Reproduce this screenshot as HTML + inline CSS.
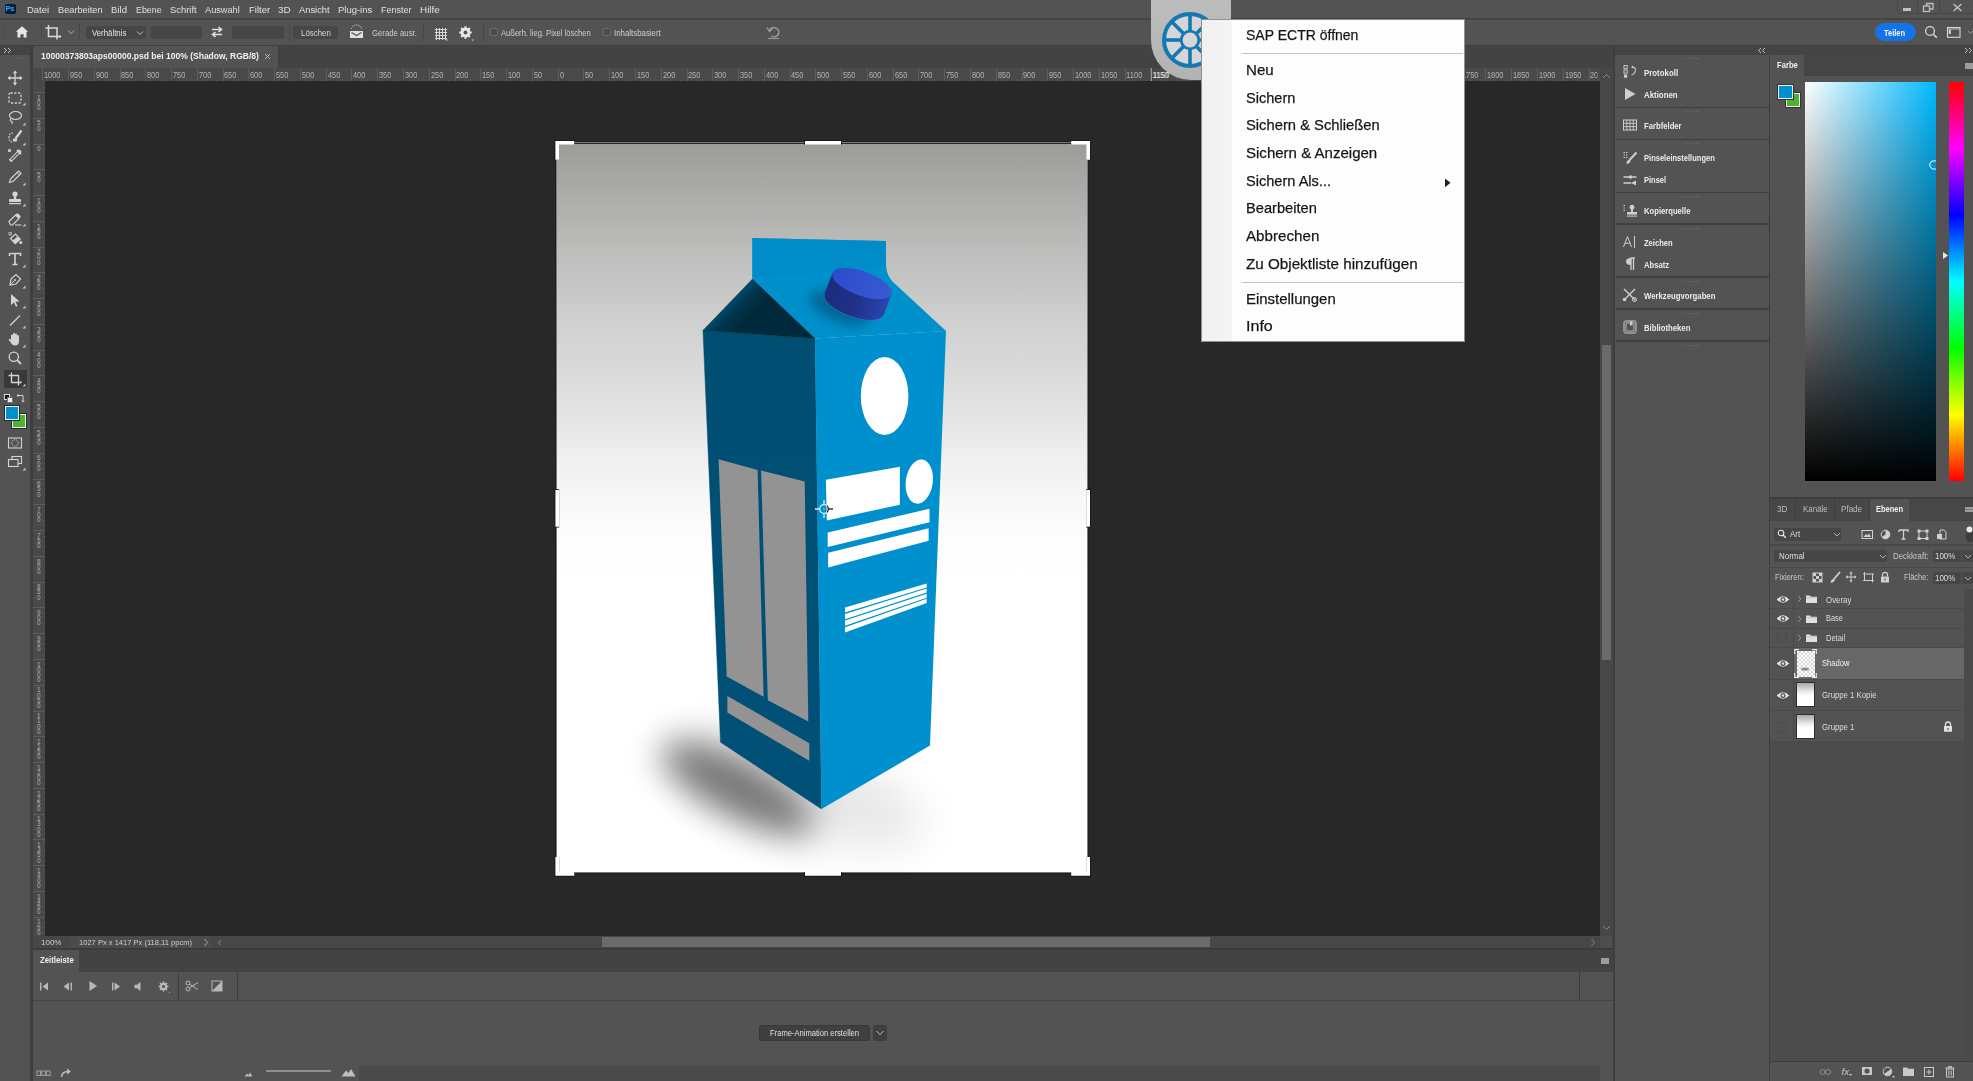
<!DOCTYPE html>
<html><head><meta charset="utf-8"><style>
html,body{margin:0;padding:0;}
body{width:1973px;height:1081px;overflow:hidden;position:relative;background:#535353;font-family:"Liberation Sans", sans-serif;}
div,svg{box-sizing:border-box;}
</style></head><body>
<div style="position:absolute;left:0px;top:0px;width:1973px;height:18px;background:#535353;"></div>
<div style="position:absolute;left:0px;top:18px;width:1973px;height:1.8px;background:#444444;"></div>
<div style="position:absolute;left:0px;top:19.5px;width:1973px;height:25.5px;background:#535353;"></div>
<div style="position:absolute;left:0px;top:45px;width:1973px;height:1px;background:#3f3f3f;"></div>
<div style="position:absolute;left:0px;top:46px;width:30px;height:1035px;background:#535353;"></div>
<div style="position:absolute;left:0px;top:46px;width:30px;height:9px;background:#444444;"></div>
<div style="position:absolute;left:30px;top:46px;width:3px;height:1035px;background:#3e3e3e;"></div>
<div style="position:absolute;left:33px;top:46px;width:1580px;height:22px;background:#434343;"></div>
<div style="position:absolute;left:33px;top:46px;width:244.6px;height:22px;background:#535353;"></div>
<div style="position:absolute;left:277.6px;top:46px;width:1.4px;height:22px;background:#3d3d3d;"></div>
<div style="position:absolute;left:33px;top:67.8px;width:1567px;height:13px;background:#494949;"></div>
<div style="position:absolute;left:33px;top:67.8px;width:12px;height:13px;background:#474747;"></div>
<div style="position:absolute;left:67.83px;top:67.8px;width:1532.17px;height:13px;background:repeating-linear-gradient(90deg,#5d5d5d 0px,#5d5d5d 1px,transparent 1px,transparent 25.772px);"></div>
<div style="position:absolute;left:47.21px;top:79px;width:1552.79px;height:1.5px;background:repeating-linear-gradient(90deg,#575757 0px,#575757 1px,transparent 1px,transparent 5.154px);"></div>
<div style="position:absolute;left:45px;top:80.5px;width:1555px;height:0.5px;background:#454545;"></div>
<div style="position:absolute;left:42.06000000000006px;top:67.8px;width:1px;height:13px;background:#5d5d5d;"></div>
<div style="position:absolute;left:44.06000000000006px;top:69.36px;height:12px;line-height:12px;font-size:8.8px;color:#b4b4b4;font-weight:normal;white-space:nowrap;transform:scaleX(0.838);transform-origin:0 50%;overflow:hidden;">1000</div>
<div style="position:absolute;left:69.83200000000005px;top:69.36px;height:12px;line-height:12px;font-size:8.8px;color:#b4b4b4;font-weight:normal;white-space:nowrap;transform:scaleX(0.838);transform-origin:0 50%;overflow:hidden;">950</div>
<div style="position:absolute;left:95.60400000000004px;top:69.36px;height:12px;line-height:12px;font-size:8.8px;color:#b4b4b4;font-weight:normal;white-space:nowrap;transform:scaleX(0.838);transform-origin:0 50%;overflow:hidden;">900</div>
<div style="position:absolute;left:121.37600000000003px;top:69.36px;height:12px;line-height:12px;font-size:8.8px;color:#b4b4b4;font-weight:normal;white-space:nowrap;transform:scaleX(0.838);transform-origin:0 50%;overflow:hidden;">850</div>
<div style="position:absolute;left:147.14800000000002px;top:69.36px;height:12px;line-height:12px;font-size:8.8px;color:#b4b4b4;font-weight:normal;white-space:nowrap;transform:scaleX(0.838);transform-origin:0 50%;overflow:hidden;">800</div>
<div style="position:absolute;left:172.92000000000002px;top:69.36px;height:12px;line-height:12px;font-size:8.8px;color:#b4b4b4;font-weight:normal;white-space:nowrap;transform:scaleX(0.838);transform-origin:0 50%;overflow:hidden;">750</div>
<div style="position:absolute;left:198.692px;top:69.36px;height:12px;line-height:12px;font-size:8.8px;color:#b4b4b4;font-weight:normal;white-space:nowrap;transform:scaleX(0.838);transform-origin:0 50%;overflow:hidden;">700</div>
<div style="position:absolute;left:224.464px;top:69.36px;height:12px;line-height:12px;font-size:8.8px;color:#b4b4b4;font-weight:normal;white-space:nowrap;transform:scaleX(0.838);transform-origin:0 50%;overflow:hidden;">650</div>
<div style="position:absolute;left:250.236px;top:69.36px;height:12px;line-height:12px;font-size:8.8px;color:#b4b4b4;font-weight:normal;white-space:nowrap;transform:scaleX(0.838);transform-origin:0 50%;overflow:hidden;">600</div>
<div style="position:absolute;left:276.00800000000004px;top:69.36px;height:12px;line-height:12px;font-size:8.8px;color:#b4b4b4;font-weight:normal;white-space:nowrap;transform:scaleX(0.838);transform-origin:0 50%;overflow:hidden;">550</div>
<div style="position:absolute;left:301.78000000000003px;top:69.36px;height:12px;line-height:12px;font-size:8.8px;color:#b4b4b4;font-weight:normal;white-space:nowrap;transform:scaleX(0.838);transform-origin:0 50%;overflow:hidden;">500</div>
<div style="position:absolute;left:327.552px;top:69.36px;height:12px;line-height:12px;font-size:8.8px;color:#b4b4b4;font-weight:normal;white-space:nowrap;transform:scaleX(0.838);transform-origin:0 50%;overflow:hidden;">450</div>
<div style="position:absolute;left:353.324px;top:69.36px;height:12px;line-height:12px;font-size:8.8px;color:#b4b4b4;font-weight:normal;white-space:nowrap;transform:scaleX(0.838);transform-origin:0 50%;overflow:hidden;">400</div>
<div style="position:absolute;left:379.096px;top:69.36px;height:12px;line-height:12px;font-size:8.8px;color:#b4b4b4;font-weight:normal;white-space:nowrap;transform:scaleX(0.838);transform-origin:0 50%;overflow:hidden;">350</div>
<div style="position:absolute;left:404.868px;top:69.36px;height:12px;line-height:12px;font-size:8.8px;color:#b4b4b4;font-weight:normal;white-space:nowrap;transform:scaleX(0.838);transform-origin:0 50%;overflow:hidden;">300</div>
<div style="position:absolute;left:430.64px;top:69.36px;height:12px;line-height:12px;font-size:8.8px;color:#b4b4b4;font-weight:normal;white-space:nowrap;transform:scaleX(0.838);transform-origin:0 50%;overflow:hidden;">250</div>
<div style="position:absolute;left:456.41200000000003px;top:69.36px;height:12px;line-height:12px;font-size:8.8px;color:#b4b4b4;font-weight:normal;white-space:nowrap;transform:scaleX(0.838);transform-origin:0 50%;overflow:hidden;">200</div>
<div style="position:absolute;left:482.18399999999997px;top:69.36px;height:12px;line-height:12px;font-size:8.8px;color:#b4b4b4;font-weight:normal;white-space:nowrap;transform:scaleX(0.838);transform-origin:0 50%;overflow:hidden;">150</div>
<div style="position:absolute;left:507.956px;top:69.36px;height:12px;line-height:12px;font-size:8.8px;color:#b4b4b4;font-weight:normal;white-space:nowrap;transform:scaleX(0.838);transform-origin:0 50%;overflow:hidden;">100</div>
<div style="position:absolute;left:533.728px;top:69.36px;height:12px;line-height:12px;font-size:8.8px;color:#b4b4b4;font-weight:normal;white-space:nowrap;transform:scaleX(0.838);transform-origin:0 50%;overflow:hidden;">50</div>
<div style="position:absolute;left:559.5px;top:69.36px;height:12px;line-height:12px;font-size:8.8px;color:#b4b4b4;font-weight:normal;white-space:nowrap;transform:scaleX(0.838);transform-origin:0 50%;overflow:hidden;">0</div>
<div style="position:absolute;left:585.272px;top:69.36px;height:12px;line-height:12px;font-size:8.8px;color:#b4b4b4;font-weight:normal;white-space:nowrap;transform:scaleX(0.838);transform-origin:0 50%;overflow:hidden;">50</div>
<div style="position:absolute;left:611.044px;top:69.36px;height:12px;line-height:12px;font-size:8.8px;color:#b4b4b4;font-weight:normal;white-space:nowrap;transform:scaleX(0.838);transform-origin:0 50%;overflow:hidden;">100</div>
<div style="position:absolute;left:636.816px;top:69.36px;height:12px;line-height:12px;font-size:8.8px;color:#b4b4b4;font-weight:normal;white-space:nowrap;transform:scaleX(0.838);transform-origin:0 50%;overflow:hidden;">150</div>
<div style="position:absolute;left:662.588px;top:69.36px;height:12px;line-height:12px;font-size:8.8px;color:#b4b4b4;font-weight:normal;white-space:nowrap;transform:scaleX(0.838);transform-origin:0 50%;overflow:hidden;">200</div>
<div style="position:absolute;left:688.36px;top:69.36px;height:12px;line-height:12px;font-size:8.8px;color:#b4b4b4;font-weight:normal;white-space:nowrap;transform:scaleX(0.838);transform-origin:0 50%;overflow:hidden;">250</div>
<div style="position:absolute;left:714.1320000000001px;top:69.36px;height:12px;line-height:12px;font-size:8.8px;color:#b4b4b4;font-weight:normal;white-space:nowrap;transform:scaleX(0.838);transform-origin:0 50%;overflow:hidden;">300</div>
<div style="position:absolute;left:739.904px;top:69.36px;height:12px;line-height:12px;font-size:8.8px;color:#b4b4b4;font-weight:normal;white-space:nowrap;transform:scaleX(0.838);transform-origin:0 50%;overflow:hidden;">350</div>
<div style="position:absolute;left:765.6759999999999px;top:69.36px;height:12px;line-height:12px;font-size:8.8px;color:#b4b4b4;font-weight:normal;white-space:nowrap;transform:scaleX(0.838);transform-origin:0 50%;overflow:hidden;">400</div>
<div style="position:absolute;left:791.448px;top:69.36px;height:12px;line-height:12px;font-size:8.8px;color:#b4b4b4;font-weight:normal;white-space:nowrap;transform:scaleX(0.838);transform-origin:0 50%;overflow:hidden;">450</div>
<div style="position:absolute;left:817.22px;top:69.36px;height:12px;line-height:12px;font-size:8.8px;color:#b4b4b4;font-weight:normal;white-space:nowrap;transform:scaleX(0.838);transform-origin:0 50%;overflow:hidden;">500</div>
<div style="position:absolute;left:842.992px;top:69.36px;height:12px;line-height:12px;font-size:8.8px;color:#b4b4b4;font-weight:normal;white-space:nowrap;transform:scaleX(0.838);transform-origin:0 50%;overflow:hidden;">550</div>
<div style="position:absolute;left:868.764px;top:69.36px;height:12px;line-height:12px;font-size:8.8px;color:#b4b4b4;font-weight:normal;white-space:nowrap;transform:scaleX(0.838);transform-origin:0 50%;overflow:hidden;">600</div>
<div style="position:absolute;left:894.5360000000001px;top:69.36px;height:12px;line-height:12px;font-size:8.8px;color:#b4b4b4;font-weight:normal;white-space:nowrap;transform:scaleX(0.838);transform-origin:0 50%;overflow:hidden;">650</div>
<div style="position:absolute;left:920.308px;top:69.36px;height:12px;line-height:12px;font-size:8.8px;color:#b4b4b4;font-weight:normal;white-space:nowrap;transform:scaleX(0.838);transform-origin:0 50%;overflow:hidden;">700</div>
<div style="position:absolute;left:946.0799999999999px;top:69.36px;height:12px;line-height:12px;font-size:8.8px;color:#b4b4b4;font-weight:normal;white-space:nowrap;transform:scaleX(0.838);transform-origin:0 50%;overflow:hidden;">750</div>
<div style="position:absolute;left:971.852px;top:69.36px;height:12px;line-height:12px;font-size:8.8px;color:#b4b4b4;font-weight:normal;white-space:nowrap;transform:scaleX(0.838);transform-origin:0 50%;overflow:hidden;">800</div>
<div style="position:absolute;left:997.624px;top:69.36px;height:12px;line-height:12px;font-size:8.8px;color:#b4b4b4;font-weight:normal;white-space:nowrap;transform:scaleX(0.838);transform-origin:0 50%;overflow:hidden;">850</div>
<div style="position:absolute;left:1023.396px;top:69.36px;height:12px;line-height:12px;font-size:8.8px;color:#b4b4b4;font-weight:normal;white-space:nowrap;transform:scaleX(0.838);transform-origin:0 50%;overflow:hidden;">900</div>
<div style="position:absolute;left:1049.168px;top:69.36px;height:12px;line-height:12px;font-size:8.8px;color:#b4b4b4;font-weight:normal;white-space:nowrap;transform:scaleX(0.838);transform-origin:0 50%;overflow:hidden;">950</div>
<div style="position:absolute;left:1074.94px;top:69.36px;height:12px;line-height:12px;font-size:8.8px;color:#b4b4b4;font-weight:normal;white-space:nowrap;transform:scaleX(0.838);transform-origin:0 50%;overflow:hidden;">1000</div>
<div style="position:absolute;left:1100.712px;top:69.36px;height:12px;line-height:12px;font-size:8.8px;color:#b4b4b4;font-weight:normal;white-space:nowrap;transform:scaleX(0.838);transform-origin:0 50%;overflow:hidden;">1050</div>
<div style="position:absolute;left:1126.484px;top:69.36px;height:12px;line-height:12px;font-size:8.8px;color:#b4b4b4;font-weight:normal;white-space:nowrap;transform:scaleX(0.867);transform-origin:0 50%;overflow:hidden;">1100</div>
<div style="position:absolute;left:1152.2559999999999px;top:69.36px;height:12px;line-height:12px;font-size:8.8px;color:#b4b4b4;font-weight:normal;white-space:nowrap;transform:scaleX(0.867);transform-origin:0 50%;overflow:hidden;">1150</div>
<div style="position:absolute;left:1178.028px;top:69.36px;height:12px;line-height:12px;font-size:8.8px;color:#b4b4b4;font-weight:normal;white-space:nowrap;transform:scaleX(0.838);transform-origin:0 50%;overflow:hidden;">1200</div>
<div style="position:absolute;left:1203.8px;top:69.36px;height:12px;line-height:12px;font-size:8.8px;color:#b4b4b4;font-weight:normal;white-space:nowrap;transform:scaleX(0.838);transform-origin:0 50%;overflow:hidden;">1250</div>
<div style="position:absolute;left:1229.5720000000001px;top:69.36px;height:12px;line-height:12px;font-size:8.8px;color:#b4b4b4;font-weight:normal;white-space:nowrap;transform:scaleX(0.838);transform-origin:0 50%;overflow:hidden;">1300</div>
<div style="position:absolute;left:1255.344px;top:69.36px;height:12px;line-height:12px;font-size:8.8px;color:#b4b4b4;font-weight:normal;white-space:nowrap;transform:scaleX(0.838);transform-origin:0 50%;overflow:hidden;">1350</div>
<div style="position:absolute;left:1281.116px;top:69.36px;height:12px;line-height:12px;font-size:8.8px;color:#b4b4b4;font-weight:normal;white-space:nowrap;transform:scaleX(0.838);transform-origin:0 50%;overflow:hidden;">1400</div>
<div style="position:absolute;left:1306.888px;top:69.36px;height:12px;line-height:12px;font-size:8.8px;color:#b4b4b4;font-weight:normal;white-space:nowrap;transform:scaleX(0.838);transform-origin:0 50%;overflow:hidden;">1450</div>
<div style="position:absolute;left:1332.6599999999999px;top:69.36px;height:12px;line-height:12px;font-size:8.8px;color:#b4b4b4;font-weight:normal;white-space:nowrap;transform:scaleX(0.838);transform-origin:0 50%;overflow:hidden;">1500</div>
<div style="position:absolute;left:1358.4319999999998px;top:69.36px;height:12px;line-height:12px;font-size:8.8px;color:#b4b4b4;font-weight:normal;white-space:nowrap;transform:scaleX(0.838);transform-origin:0 50%;overflow:hidden;">1550</div>
<div style="position:absolute;left:1384.204px;top:69.36px;height:12px;line-height:12px;font-size:8.8px;color:#b4b4b4;font-weight:normal;white-space:nowrap;transform:scaleX(0.838);transform-origin:0 50%;overflow:hidden;">1600</div>
<div style="position:absolute;left:1409.976px;top:69.36px;height:12px;line-height:12px;font-size:8.8px;color:#b4b4b4;font-weight:normal;white-space:nowrap;transform:scaleX(0.838);transform-origin:0 50%;overflow:hidden;">1650</div>
<div style="position:absolute;left:1435.748px;top:69.36px;height:12px;line-height:12px;font-size:8.8px;color:#b4b4b4;font-weight:normal;white-space:nowrap;transform:scaleX(0.838);transform-origin:0 50%;overflow:hidden;">1700</div>
<div style="position:absolute;left:1461.52px;top:69.36px;height:12px;line-height:12px;font-size:8.8px;color:#b4b4b4;font-weight:normal;white-space:nowrap;transform:scaleX(0.838);transform-origin:0 50%;overflow:hidden;">1750</div>
<div style="position:absolute;left:1487.292px;top:69.36px;height:12px;line-height:12px;font-size:8.8px;color:#b4b4b4;font-weight:normal;white-space:nowrap;transform:scaleX(0.838);transform-origin:0 50%;overflow:hidden;">1800</div>
<div style="position:absolute;left:1513.0639999999999px;top:69.36px;height:12px;line-height:12px;font-size:8.8px;color:#b4b4b4;font-weight:normal;white-space:nowrap;transform:scaleX(0.838);transform-origin:0 50%;overflow:hidden;">1850</div>
<div style="position:absolute;left:1538.8359999999998px;top:69.36px;height:12px;line-height:12px;font-size:8.8px;color:#b4b4b4;font-weight:normal;white-space:nowrap;transform:scaleX(0.838);transform-origin:0 50%;overflow:hidden;">1900</div>
<div style="position:absolute;left:1564.608px;top:69.36px;height:12px;line-height:12px;font-size:8.8px;color:#b4b4b4;font-weight:normal;white-space:nowrap;transform:scaleX(0.838);transform-origin:0 50%;overflow:hidden;">1950</div>
<div style="position:absolute;left:1590.3799999999999px;top:69.36px;height:12px;line-height:12px;font-size:8.8px;color:#b4b4b4;font-weight:normal;white-space:nowrap;transform:scaleX(0.838);transform-origin:0 50%;overflow:hidden;width:9.1px;">2000</div>
<div style="position:absolute;left:32.5px;top:80.8px;width:12.7px;height:855px;background:#494949;"></div>
<div style="position:absolute;left:32.5px;top:92.46px;width:12.7px;height:843.54px;background:repeating-linear-gradient(180deg,#5d5d5d 0px,#5d5d5d 1px,transparent 1px,transparent 25.772px);"></div>
<div style="position:absolute;left:43.6px;top:82.15px;width:1.5px;height:853.85px;background:repeating-linear-gradient(180deg,#575757 0px,#575757 1px,transparent 1px,transparent 5.154px);"></div>
<div style="position:absolute;left:36.9px;top:92.67px;height:9px;line-height:9px;font-size:6.3px;color:#b0b0b0;font-weight:normal;white-space:nowrap;">1</div>
<div style="position:absolute;left:36.9px;top:97.82px;height:9px;line-height:9px;font-size:6.3px;color:#b0b0b0;font-weight:normal;white-space:nowrap;">0</div>
<div style="position:absolute;left:36.9px;top:102.97px;height:9px;line-height:9px;font-size:6.3px;color:#b0b0b0;font-weight:normal;white-space:nowrap;">0</div>
<div style="position:absolute;left:36.9px;top:118.44px;height:9px;line-height:9px;font-size:6.3px;color:#b0b0b0;font-weight:normal;white-space:nowrap;">5</div>
<div style="position:absolute;left:36.9px;top:123.59px;height:9px;line-height:9px;font-size:6.3px;color:#b0b0b0;font-weight:normal;white-space:nowrap;">0</div>
<div style="position:absolute;left:36.9px;top:144.21px;height:9px;line-height:9px;font-size:6.3px;color:#b0b0b0;font-weight:normal;white-space:nowrap;">0</div>
<div style="position:absolute;left:36.9px;top:169.99px;height:9px;line-height:9px;font-size:6.3px;color:#b0b0b0;font-weight:normal;white-space:nowrap;">5</div>
<div style="position:absolute;left:36.9px;top:175.14px;height:9px;line-height:9px;font-size:6.3px;color:#b0b0b0;font-weight:normal;white-space:nowrap;">0</div>
<div style="position:absolute;left:36.9px;top:195.76px;height:9px;line-height:9px;font-size:6.3px;color:#b0b0b0;font-weight:normal;white-space:nowrap;">1</div>
<div style="position:absolute;left:36.9px;top:200.91px;height:9px;line-height:9px;font-size:6.3px;color:#b0b0b0;font-weight:normal;white-space:nowrap;">0</div>
<div style="position:absolute;left:36.9px;top:206.06px;height:9px;line-height:9px;font-size:6.3px;color:#b0b0b0;font-weight:normal;white-space:nowrap;">0</div>
<div style="position:absolute;left:36.9px;top:221.53px;height:9px;line-height:9px;font-size:6.3px;color:#b0b0b0;font-weight:normal;white-space:nowrap;">1</div>
<div style="position:absolute;left:36.9px;top:226.68px;height:9px;line-height:9px;font-size:6.3px;color:#b0b0b0;font-weight:normal;white-space:nowrap;">5</div>
<div style="position:absolute;left:36.9px;top:231.83px;height:9px;line-height:9px;font-size:6.3px;color:#b0b0b0;font-weight:normal;white-space:nowrap;">0</div>
<div style="position:absolute;left:36.9px;top:247.30px;height:9px;line-height:9px;font-size:6.3px;color:#b0b0b0;font-weight:normal;white-space:nowrap;">2</div>
<div style="position:absolute;left:36.9px;top:252.45px;height:9px;line-height:9px;font-size:6.3px;color:#b0b0b0;font-weight:normal;white-space:nowrap;">0</div>
<div style="position:absolute;left:36.9px;top:257.60px;height:9px;line-height:9px;font-size:6.3px;color:#b0b0b0;font-weight:normal;white-space:nowrap;">0</div>
<div style="position:absolute;left:36.9px;top:273.07px;height:9px;line-height:9px;font-size:6.3px;color:#b0b0b0;font-weight:normal;white-space:nowrap;">2</div>
<div style="position:absolute;left:36.9px;top:278.22px;height:9px;line-height:9px;font-size:6.3px;color:#b0b0b0;font-weight:normal;white-space:nowrap;">5</div>
<div style="position:absolute;left:36.9px;top:283.37px;height:9px;line-height:9px;font-size:6.3px;color:#b0b0b0;font-weight:normal;white-space:nowrap;">0</div>
<div style="position:absolute;left:36.9px;top:298.85px;height:9px;line-height:9px;font-size:6.3px;color:#b0b0b0;font-weight:normal;white-space:nowrap;">3</div>
<div style="position:absolute;left:36.9px;top:304.00px;height:9px;line-height:9px;font-size:6.3px;color:#b0b0b0;font-weight:normal;white-space:nowrap;">0</div>
<div style="position:absolute;left:36.9px;top:309.15px;height:9px;line-height:9px;font-size:6.3px;color:#b0b0b0;font-weight:normal;white-space:nowrap;">0</div>
<div style="position:absolute;left:36.9px;top:324.62px;height:9px;line-height:9px;font-size:6.3px;color:#b0b0b0;font-weight:normal;white-space:nowrap;">3</div>
<div style="position:absolute;left:36.9px;top:329.77px;height:9px;line-height:9px;font-size:6.3px;color:#b0b0b0;font-weight:normal;white-space:nowrap;">5</div>
<div style="position:absolute;left:36.9px;top:334.92px;height:9px;line-height:9px;font-size:6.3px;color:#b0b0b0;font-weight:normal;white-space:nowrap;">0</div>
<div style="position:absolute;left:36.9px;top:350.39px;height:9px;line-height:9px;font-size:6.3px;color:#b0b0b0;font-weight:normal;white-space:nowrap;">4</div>
<div style="position:absolute;left:36.9px;top:355.54px;height:9px;line-height:9px;font-size:6.3px;color:#b0b0b0;font-weight:normal;white-space:nowrap;">0</div>
<div style="position:absolute;left:36.9px;top:360.69px;height:9px;line-height:9px;font-size:6.3px;color:#b0b0b0;font-weight:normal;white-space:nowrap;">0</div>
<div style="position:absolute;left:36.9px;top:376.16px;height:9px;line-height:9px;font-size:6.3px;color:#b0b0b0;font-weight:normal;white-space:nowrap;">4</div>
<div style="position:absolute;left:36.9px;top:381.31px;height:9px;line-height:9px;font-size:6.3px;color:#b0b0b0;font-weight:normal;white-space:nowrap;">5</div>
<div style="position:absolute;left:36.9px;top:386.46px;height:9px;line-height:9px;font-size:6.3px;color:#b0b0b0;font-weight:normal;white-space:nowrap;">0</div>
<div style="position:absolute;left:36.9px;top:401.93px;height:9px;line-height:9px;font-size:6.3px;color:#b0b0b0;font-weight:normal;white-space:nowrap;">5</div>
<div style="position:absolute;left:36.9px;top:407.08px;height:9px;line-height:9px;font-size:6.3px;color:#b0b0b0;font-weight:normal;white-space:nowrap;">0</div>
<div style="position:absolute;left:36.9px;top:412.23px;height:9px;line-height:9px;font-size:6.3px;color:#b0b0b0;font-weight:normal;white-space:nowrap;">0</div>
<div style="position:absolute;left:36.9px;top:427.71px;height:9px;line-height:9px;font-size:6.3px;color:#b0b0b0;font-weight:normal;white-space:nowrap;">5</div>
<div style="position:absolute;left:36.9px;top:432.86px;height:9px;line-height:9px;font-size:6.3px;color:#b0b0b0;font-weight:normal;white-space:nowrap;">5</div>
<div style="position:absolute;left:36.9px;top:438.01px;height:9px;line-height:9px;font-size:6.3px;color:#b0b0b0;font-weight:normal;white-space:nowrap;">0</div>
<div style="position:absolute;left:36.9px;top:453.48px;height:9px;line-height:9px;font-size:6.3px;color:#b0b0b0;font-weight:normal;white-space:nowrap;">6</div>
<div style="position:absolute;left:36.9px;top:458.63px;height:9px;line-height:9px;font-size:6.3px;color:#b0b0b0;font-weight:normal;white-space:nowrap;">0</div>
<div style="position:absolute;left:36.9px;top:463.78px;height:9px;line-height:9px;font-size:6.3px;color:#b0b0b0;font-weight:normal;white-space:nowrap;">0</div>
<div style="position:absolute;left:36.9px;top:479.25px;height:9px;line-height:9px;font-size:6.3px;color:#b0b0b0;font-weight:normal;white-space:nowrap;">6</div>
<div style="position:absolute;left:36.9px;top:484.40px;height:9px;line-height:9px;font-size:6.3px;color:#b0b0b0;font-weight:normal;white-space:nowrap;">5</div>
<div style="position:absolute;left:36.9px;top:489.55px;height:9px;line-height:9px;font-size:6.3px;color:#b0b0b0;font-weight:normal;white-space:nowrap;">0</div>
<div style="position:absolute;left:36.9px;top:505.02px;height:9px;line-height:9px;font-size:6.3px;color:#b0b0b0;font-weight:normal;white-space:nowrap;">7</div>
<div style="position:absolute;left:36.9px;top:510.17px;height:9px;line-height:9px;font-size:6.3px;color:#b0b0b0;font-weight:normal;white-space:nowrap;">0</div>
<div style="position:absolute;left:36.9px;top:515.32px;height:9px;line-height:9px;font-size:6.3px;color:#b0b0b0;font-weight:normal;white-space:nowrap;">0</div>
<div style="position:absolute;left:36.9px;top:530.79px;height:9px;line-height:9px;font-size:6.3px;color:#b0b0b0;font-weight:normal;white-space:nowrap;">7</div>
<div style="position:absolute;left:36.9px;top:535.94px;height:9px;line-height:9px;font-size:6.3px;color:#b0b0b0;font-weight:normal;white-space:nowrap;">5</div>
<div style="position:absolute;left:36.9px;top:541.09px;height:9px;line-height:9px;font-size:6.3px;color:#b0b0b0;font-weight:normal;white-space:nowrap;">0</div>
<div style="position:absolute;left:36.9px;top:556.57px;height:9px;line-height:9px;font-size:6.3px;color:#b0b0b0;font-weight:normal;white-space:nowrap;">8</div>
<div style="position:absolute;left:36.9px;top:561.72px;height:9px;line-height:9px;font-size:6.3px;color:#b0b0b0;font-weight:normal;white-space:nowrap;">0</div>
<div style="position:absolute;left:36.9px;top:566.87px;height:9px;line-height:9px;font-size:6.3px;color:#b0b0b0;font-weight:normal;white-space:nowrap;">0</div>
<div style="position:absolute;left:36.9px;top:582.34px;height:9px;line-height:9px;font-size:6.3px;color:#b0b0b0;font-weight:normal;white-space:nowrap;">8</div>
<div style="position:absolute;left:36.9px;top:587.49px;height:9px;line-height:9px;font-size:6.3px;color:#b0b0b0;font-weight:normal;white-space:nowrap;">5</div>
<div style="position:absolute;left:36.9px;top:592.64px;height:9px;line-height:9px;font-size:6.3px;color:#b0b0b0;font-weight:normal;white-space:nowrap;">0</div>
<div style="position:absolute;left:36.9px;top:608.11px;height:9px;line-height:9px;font-size:6.3px;color:#b0b0b0;font-weight:normal;white-space:nowrap;">9</div>
<div style="position:absolute;left:36.9px;top:613.26px;height:9px;line-height:9px;font-size:6.3px;color:#b0b0b0;font-weight:normal;white-space:nowrap;">0</div>
<div style="position:absolute;left:36.9px;top:618.41px;height:9px;line-height:9px;font-size:6.3px;color:#b0b0b0;font-weight:normal;white-space:nowrap;">0</div>
<div style="position:absolute;left:36.9px;top:633.88px;height:9px;line-height:9px;font-size:6.3px;color:#b0b0b0;font-weight:normal;white-space:nowrap;">9</div>
<div style="position:absolute;left:36.9px;top:639.03px;height:9px;line-height:9px;font-size:6.3px;color:#b0b0b0;font-weight:normal;white-space:nowrap;">5</div>
<div style="position:absolute;left:36.9px;top:644.18px;height:9px;line-height:9px;font-size:6.3px;color:#b0b0b0;font-weight:normal;white-space:nowrap;">0</div>
<div style="position:absolute;left:36.9px;top:659.65px;height:9px;line-height:9px;font-size:6.3px;color:#b0b0b0;font-weight:normal;white-space:nowrap;">1</div>
<div style="position:absolute;left:36.9px;top:664.80px;height:9px;line-height:9px;font-size:6.3px;color:#b0b0b0;font-weight:normal;white-space:nowrap;">0</div>
<div style="position:absolute;left:36.9px;top:669.95px;height:9px;line-height:9px;font-size:6.3px;color:#b0b0b0;font-weight:normal;white-space:nowrap;">0</div>
<div style="position:absolute;left:36.9px;top:675.10px;height:9px;line-height:9px;font-size:6.3px;color:#b0b0b0;font-weight:normal;white-space:nowrap;">0</div>
<div style="position:absolute;left:36.9px;top:685.43px;height:9px;line-height:9px;font-size:6.3px;color:#b0b0b0;font-weight:normal;white-space:nowrap;">1</div>
<div style="position:absolute;left:36.9px;top:690.58px;height:9px;line-height:9px;font-size:6.3px;color:#b0b0b0;font-weight:normal;white-space:nowrap;">0</div>
<div style="position:absolute;left:36.9px;top:695.73px;height:9px;line-height:9px;font-size:6.3px;color:#b0b0b0;font-weight:normal;white-space:nowrap;">5</div>
<div style="position:absolute;left:36.9px;top:700.88px;height:9px;line-height:9px;font-size:6.3px;color:#b0b0b0;font-weight:normal;white-space:nowrap;">0</div>
<div style="position:absolute;left:36.9px;top:711.20px;height:9px;line-height:9px;font-size:6.3px;color:#b0b0b0;font-weight:normal;white-space:nowrap;">1</div>
<div style="position:absolute;left:36.9px;top:716.35px;height:9px;line-height:9px;font-size:6.3px;color:#b0b0b0;font-weight:normal;white-space:nowrap;">1</div>
<div style="position:absolute;left:36.9px;top:721.50px;height:9px;line-height:9px;font-size:6.3px;color:#b0b0b0;font-weight:normal;white-space:nowrap;">0</div>
<div style="position:absolute;left:36.9px;top:726.65px;height:9px;line-height:9px;font-size:6.3px;color:#b0b0b0;font-weight:normal;white-space:nowrap;">0</div>
<div style="position:absolute;left:36.9px;top:736.97px;height:9px;line-height:9px;font-size:6.3px;color:#b0b0b0;font-weight:normal;white-space:nowrap;">1</div>
<div style="position:absolute;left:36.9px;top:742.12px;height:9px;line-height:9px;font-size:6.3px;color:#b0b0b0;font-weight:normal;white-space:nowrap;">1</div>
<div style="position:absolute;left:36.9px;top:747.27px;height:9px;line-height:9px;font-size:6.3px;color:#b0b0b0;font-weight:normal;white-space:nowrap;">5</div>
<div style="position:absolute;left:36.9px;top:752.42px;height:9px;line-height:9px;font-size:6.3px;color:#b0b0b0;font-weight:normal;white-space:nowrap;">0</div>
<div style="position:absolute;left:36.9px;top:762.74px;height:9px;line-height:9px;font-size:6.3px;color:#b0b0b0;font-weight:normal;white-space:nowrap;">1</div>
<div style="position:absolute;left:36.9px;top:767.89px;height:9px;line-height:9px;font-size:6.3px;color:#b0b0b0;font-weight:normal;white-space:nowrap;">2</div>
<div style="position:absolute;left:36.9px;top:773.04px;height:9px;line-height:9px;font-size:6.3px;color:#b0b0b0;font-weight:normal;white-space:nowrap;">0</div>
<div style="position:absolute;left:36.9px;top:778.19px;height:9px;line-height:9px;font-size:6.3px;color:#b0b0b0;font-weight:normal;white-space:nowrap;">0</div>
<div style="position:absolute;left:36.9px;top:788.51px;height:9px;line-height:9px;font-size:6.3px;color:#b0b0b0;font-weight:normal;white-space:nowrap;">1</div>
<div style="position:absolute;left:36.9px;top:793.66px;height:9px;line-height:9px;font-size:6.3px;color:#b0b0b0;font-weight:normal;white-space:nowrap;">2</div>
<div style="position:absolute;left:36.9px;top:798.81px;height:9px;line-height:9px;font-size:6.3px;color:#b0b0b0;font-weight:normal;white-space:nowrap;">5</div>
<div style="position:absolute;left:36.9px;top:803.96px;height:9px;line-height:9px;font-size:6.3px;color:#b0b0b0;font-weight:normal;white-space:nowrap;">0</div>
<div style="position:absolute;left:36.9px;top:814.29px;height:9px;line-height:9px;font-size:6.3px;color:#b0b0b0;font-weight:normal;white-space:nowrap;">1</div>
<div style="position:absolute;left:36.9px;top:819.44px;height:9px;line-height:9px;font-size:6.3px;color:#b0b0b0;font-weight:normal;white-space:nowrap;">3</div>
<div style="position:absolute;left:36.9px;top:824.59px;height:9px;line-height:9px;font-size:6.3px;color:#b0b0b0;font-weight:normal;white-space:nowrap;">0</div>
<div style="position:absolute;left:36.9px;top:829.74px;height:9px;line-height:9px;font-size:6.3px;color:#b0b0b0;font-weight:normal;white-space:nowrap;">0</div>
<div style="position:absolute;left:36.9px;top:840.06px;height:9px;line-height:9px;font-size:6.3px;color:#b0b0b0;font-weight:normal;white-space:nowrap;">1</div>
<div style="position:absolute;left:36.9px;top:845.21px;height:9px;line-height:9px;font-size:6.3px;color:#b0b0b0;font-weight:normal;white-space:nowrap;">3</div>
<div style="position:absolute;left:36.9px;top:850.36px;height:9px;line-height:9px;font-size:6.3px;color:#b0b0b0;font-weight:normal;white-space:nowrap;">5</div>
<div style="position:absolute;left:36.9px;top:855.51px;height:9px;line-height:9px;font-size:6.3px;color:#b0b0b0;font-weight:normal;white-space:nowrap;">0</div>
<div style="position:absolute;left:36.9px;top:865.83px;height:9px;line-height:9px;font-size:6.3px;color:#b0b0b0;font-weight:normal;white-space:nowrap;">1</div>
<div style="position:absolute;left:36.9px;top:870.98px;height:9px;line-height:9px;font-size:6.3px;color:#b0b0b0;font-weight:normal;white-space:nowrap;">4</div>
<div style="position:absolute;left:36.9px;top:876.13px;height:9px;line-height:9px;font-size:6.3px;color:#b0b0b0;font-weight:normal;white-space:nowrap;">0</div>
<div style="position:absolute;left:36.9px;top:881.28px;height:9px;line-height:9px;font-size:6.3px;color:#b0b0b0;font-weight:normal;white-space:nowrap;">0</div>
<div style="position:absolute;left:36.9px;top:891.60px;height:9px;line-height:9px;font-size:6.3px;color:#b0b0b0;font-weight:normal;white-space:nowrap;">1</div>
<div style="position:absolute;left:36.9px;top:896.75px;height:9px;line-height:9px;font-size:6.3px;color:#b0b0b0;font-weight:normal;white-space:nowrap;">4</div>
<div style="position:absolute;left:36.9px;top:901.90px;height:9px;line-height:9px;font-size:6.3px;color:#b0b0b0;font-weight:normal;white-space:nowrap;">5</div>
<div style="position:absolute;left:36.9px;top:907.05px;height:9px;line-height:9px;font-size:6.3px;color:#b0b0b0;font-weight:normal;white-space:nowrap;">0</div>
<div style="position:absolute;left:36.9px;top:917.37px;height:9px;line-height:9px;font-size:6.3px;color:#b0b0b0;font-weight:normal;white-space:nowrap;">1</div>
<div style="position:absolute;left:36.9px;top:922.52px;height:9px;line-height:9px;font-size:6.3px;color:#b0b0b0;font-weight:normal;white-space:nowrap;">5</div>
<div style="position:absolute;left:36.9px;top:927.67px;height:9px;line-height:9px;font-size:6.3px;color:#b0b0b0;font-weight:normal;white-space:nowrap;">0</div>
<div style="position:absolute;left:45px;top:81px;width:1555px;height:855px;background:#282828;"></div>
<div style="position:absolute;left:1600px;top:68px;width:13px;height:868px;background:#474747;"></div>
<div style="position:absolute;left:1602px;top:345px;width:9px;height:315px;background:#6a6a6a;"></div>
<div style="position:absolute;left:1613px;top:46px;width:2px;height:1035px;background:#3e3e3e;"></div>
<div style="position:absolute;left:33px;top:936px;width:1580px;height:12px;background:#474747;"></div>
<div style="position:absolute;left:70px;top:936px;width:141px;height:12px;background:#4b4b4b;"></div>
<div style="position:absolute;left:602px;top:937px;width:608px;height:9.5px;background:#6b6b6b;"></div>
<div style="position:absolute;left:33px;top:948px;width:1580px;height:2px;background:#3b3b3b;"></div>
<div style="position:absolute;left:33px;top:950px;width:1580px;height:22px;background:#434343;"></div>
<div style="position:absolute;left:33px;top:950px;width:46px;height:22px;background:#535353;"></div>
<div style="position:absolute;left:33px;top:972px;width:1580px;height:28px;background:#535353;"></div>
<div style="position:absolute;left:33px;top:1000px;width:1580px;height:1px;background:#454545;"></div>
<div style="position:absolute;left:33px;top:1001px;width:1580px;height:65px;background:#535353;"></div>
<div style="position:absolute;left:33px;top:1066px;width:1566.5px;height:15px;background:#4a4a4a;"></div>
<div style="position:absolute;left:33px;top:1066px;width:326px;height:15px;background:#535353;"></div>
<div style="position:absolute;left:1615px;top:46px;width:358px;height:9px;background:#444444;"></div>
<div style="position:absolute;left:1615px;top:55px;width:153.5px;height:1026px;background:#535353;"></div>
<div style="position:absolute;left:1768.5px;top:55px;width:1.5px;height:1026px;background:#3e3e3e;"></div>
<div style="position:absolute;left:1770px;top:55px;width:203px;height:21px;background:#454545;"></div>
<div style="position:absolute;left:1770px;top:55px;width:34px;height:21px;background:#535353;"></div>
<div style="position:absolute;left:1770px;top:76px;width:203px;height:421px;background:#535353;"></div>
<div style="position:absolute;left:1770px;top:497px;width:203px;height:1.5px;background:#3e3e3e;"></div>
<div style="position:absolute;left:1770px;top:498.5px;width:203px;height:22px;background:#474747;"></div>
<div style="position:absolute;left:1869px;top:498.5px;width:40px;height:22px;background:#535353;"></div>
<div style="position:absolute;left:1770px;top:520.5px;width:203px;height:561px;background:#535353;"></div>
<div style="position:absolute;left:5px;top:4px;width:10.5px;height:10px;background:#001e36;border-radius:2px;"></div>
<div style="position:absolute;left:5.6px;top:4.13px;height:10px;line-height:10px;font-size:7.5px;color:#31a8ff;font-weight:bold;white-space:nowrap;letter-spacing:-0.3px;">Ps</div>
<div style="position:absolute;left:27.0px;top:2.87px;height:13px;line-height:13px;font-size:9.6px;color:#e0e0e0;font-weight:normal;white-space:nowrap;transform:scaleX(0.986);transform-origin:0 50%;">Datei</div>
<div style="position:absolute;left:57.9px;top:2.87px;height:13px;line-height:13px;font-size:9.6px;color:#e0e0e0;font-weight:normal;white-space:nowrap;transform:scaleX(0.960);transform-origin:0 50%;">Bearbeiten</div>
<div style="position:absolute;left:111.1px;top:2.87px;height:13px;line-height:13px;font-size:9.6px;color:#e0e0e0;font-weight:normal;white-space:nowrap;transform:scaleX(0.999);transform-origin:0 50%;">Bild</div>
<div style="position:absolute;left:135.9px;top:2.87px;height:13px;line-height:13px;font-size:9.6px;color:#e0e0e0;font-weight:normal;white-space:nowrap;transform:scaleX(0.922);transform-origin:0 50%;">Ebene</div>
<div style="position:absolute;left:169.6px;top:2.87px;height:13px;line-height:13px;font-size:9.6px;color:#e0e0e0;font-weight:normal;white-space:nowrap;transform:scaleX(0.978);transform-origin:0 50%;">Schrift</div>
<div style="position:absolute;left:205.4px;top:2.87px;height:13px;line-height:13px;font-size:9.6px;color:#e0e0e0;font-weight:normal;white-space:nowrap;transform:scaleX(0.959);transform-origin:0 50%;">Auswahl</div>
<div style="position:absolute;left:248.5px;top:2.87px;height:13px;line-height:13px;font-size:9.6px;color:#e0e0e0;font-weight:normal;white-space:nowrap;transform:scaleX(0.989);transform-origin:0 50%;">Filter</div>
<div style="position:absolute;left:277.90000000000003px;top:2.87px;height:13px;line-height:13px;font-size:9.6px;color:#e0e0e0;font-weight:normal;white-space:nowrap;transform:scaleX(1.035);transform-origin:0 50%;">3D</div>
<div style="position:absolute;left:298.6px;top:2.87px;height:13px;line-height:13px;font-size:9.6px;color:#e0e0e0;font-weight:normal;white-space:nowrap;transform:scaleX(0.975);transform-origin:0 50%;">Ansicht</div>
<div style="position:absolute;left:338.20000000000005px;top:2.87px;height:13px;line-height:13px;font-size:9.6px;color:#e0e0e0;font-weight:normal;white-space:nowrap;transform:scaleX(0.986);transform-origin:0 50%;">Plug-ins</div>
<div style="position:absolute;left:380.5px;top:2.87px;height:13px;line-height:13px;font-size:9.6px;color:#e0e0e0;font-weight:normal;white-space:nowrap;transform:scaleX(0.937);transform-origin:0 50%;">Fenster</div>
<div style="position:absolute;left:419.8px;top:2.87px;height:13px;line-height:13px;font-size:9.6px;color:#e0e0e0;font-weight:normal;white-space:nowrap;transform:scaleX(1.031);transform-origin:0 50%;">Hilfe</div>
<div style="position:absolute;left:1896.7px;top:-2px;width:80px;height:16px;background:transparent;border:1px solid #474747;border-radius:3px;"></div>
<div style="position:absolute;left:1917.3px;top:0px;width:1px;height:14px;background:#474747;"></div>
<div style="position:absolute;left:1938.5px;top:0px;width:1px;height:14px;background:#474747;"></div>
<div style="position:absolute;left:1903px;top:8px;width:8px;height:2.5px;background:#c0c0c0;"></div>
<svg style="position:absolute;left:1922px;top:2px;overflow:visible;" width="13" height="11" viewBox="0 0 13 11"><rect x="1.5" y="4" width="6" height="5.5" fill="none" stroke="#c0c0c0" stroke-width="1.3"/><path d="M4.5 4 V1.5 H11 V7 H7.5" fill="none" stroke="#c0c0c0" stroke-width="1.3"/></svg>
<svg style="position:absolute;left:1952px;top:3px;overflow:visible;" width="11" height="9" viewBox="0 0 11 9"><path d="M1.5 1 L9.5 8 M9.5 1 L1.5 8" stroke="#c8c8c8" stroke-width="1.2"/></svg>
<div style="position:absolute;left:4px;top:23px;width:1px;height:19px;background:#4a4a4a;"></div>
<svg style="position:absolute;left:15px;top:25px;overflow:visible;" width="14" height="14" viewBox="0 0 14 14"><path d="M7 1.2 L13.2 6.8 H11.5 V12.5 H8.6 V9.2 H5.4 V12.5 H2.5 V6.8 H0.8 Z" fill="#e6e6e6"/></svg>
<div style="position:absolute;left:41px;top:24px;width:1px;height:17px;background:#474747;"></div>
<svg style="position:absolute;left:45px;top:24px;overflow:visible;" width="18" height="16" viewBox="0 0 18 16"><path d="M3.5 1 V12.5 H15" fill="none" stroke="#dcdcdc" stroke-width="1.5"/><path d="M0.5 4 H12 V15.5" fill="none" stroke="#dcdcdc" stroke-width="1.5"/><rect x="14" y="11.5" width="2" height="2" fill="#dcdcdc"/></svg>
<svg style="position:absolute;left:67px;top:29px;overflow:visible;" width="8" height="6" viewBox="0 0 8 6"><path d="M1 1.5 L4 4.5 L7 1.5" fill="none" stroke="#b0b0b0" stroke-width="1"/></svg>
<div style="position:absolute;left:79px;top:24px;width:1px;height:17px;background:#474747;"></div>
<div style="position:absolute;left:86px;top:26px;width:60px;height:13px;background:#464646;border-radius:2px;"></div>
<div style="position:absolute;left:91.5px;top:25.87px;height:13px;line-height:13px;font-size:9.5px;color:#e4e4e4;font-weight:normal;white-space:nowrap;transform:scaleX(0.822);transform-origin:0 50%;">Verhältnis</div>
<svg style="position:absolute;left:136px;top:30px;overflow:visible;" width="8" height="6" viewBox="0 0 8 6"><path d="M1 1.5 L4 4.5 L7 1.5" fill="none" stroke="#c0c0c0" stroke-width="1"/></svg>
<div style="position:absolute;left:151px;top:26px;width:51px;height:12.5px;background:#464646;border-radius:2px;"></div>
<svg style="position:absolute;left:210px;top:25px;overflow:visible;" width="14" height="14" viewBox="0 0 14 14"><path d="M2 4.5 H11 M8.5 2 L11.5 4.5 L8.5 7" fill="none" stroke="#e0e0e0" stroke-width="1.6"/><path d="M12 9.5 H3 M5.5 7 L2.5 9.5 L5.5 12" fill="none" stroke="#e0e0e0" stroke-width="1.6"/></svg>
<div style="position:absolute;left:232px;top:26px;width:52px;height:12.5px;background:#464646;border-radius:2px;"></div>
<div style="position:absolute;left:288.5px;top:24px;width:1px;height:17px;background:#474747;"></div>
<div style="position:absolute;left:293px;top:26px;width:45px;height:13px;background:#474747;border-radius:2px;"></div>
<div style="position:absolute;left:300.6px;top:26.07px;height:13px;line-height:13px;font-size:9.5px;color:#d8d8d8;font-weight:normal;white-space:nowrap;transform:scaleX(0.830);transform-origin:0 50%;">Löschen</div>
<svg style="position:absolute;left:348px;top:24px;overflow:visible;" width="17" height="16" viewBox="0 0 17 16"><path d="M2 7 H15 V14 H2 Z" fill="#e0e0e0"/><path d="M3.5 8.5 L8.5 11.5 L13.5 8.5" fill="none" stroke="#535353" stroke-width="1.2"/><path d="M3.5 5 A5 4 0 0 1 13.5 5" fill="none" stroke="#d0d0d0" stroke-width="1" stroke-dasharray="1.2 1"/></svg>
<div style="position:absolute;left:371.6px;top:26.07px;height:13px;line-height:13px;font-size:9.5px;color:#d0d0d0;font-weight:normal;white-space:nowrap;transform:scaleX(0.816);transform-origin:0 50%;">Gerade ausr.</div>
<div style="position:absolute;left:423px;top:24px;width:1px;height:17px;background:#474747;"></div>
<svg style="position:absolute;left:432px;top:25px;overflow:visible;" width="17" height="17" viewBox="0 0 17 17"><path d="M2.5 4 H14.5 M2.5 7 H14.5 M2.5 10 H14.5 M2.5 13 H14.5 M4 2.5 V14.5 M7 2.5 V14.5 M10 2.5 V14.5 M13 2.5 V14.5" stroke="#d8d8d8" stroke-width="1" shape-rendering="crispEdges"/><path d="M13.5 14.5 H16 L14.75 16 Z" fill="#cfcfcf"/></svg>
<svg style="position:absolute;left:457px;top:25px;overflow:visible;" width="18" height="17" viewBox="0 0 18 17"><path d="M13.29 6.45 L14.71 6.42 L14.71 8.58 L13.29 8.55 L12.63 10.14 L13.65 11.12 L12.12 12.65 L11.14 11.63 L9.55 12.29 L9.58 13.71 L7.42 13.71 L7.45 12.29 L5.86 11.63 L4.88 12.65 L3.35 11.12 L4.37 10.14 L3.71 8.55 L2.29 8.58 L2.29 6.42 L3.71 6.45 L4.37 4.86 L3.35 3.88 L4.88 2.35 L5.86 3.37 L7.45 2.71 L7.42 1.29 L9.58 1.29 L9.55 2.71 L11.14 3.37 L12.12 2.35 L13.65 3.88 L12.63 4.86 Z" fill="#e8e8e8"/><circle cx="8.5" cy="7.5" r="2" fill="#535353"/><path d="M14.5 14.5 H17 L15.75 16 Z" fill="#cfcfcf"/></svg>
<div style="position:absolute;left:483px;top:24px;width:1px;height:17px;background:#474747;"></div>
<div style="position:absolute;left:490px;top:28px;width:8px;height:8px;background:transparent;border:1px solid #6e6e6e;border-radius:1.5px;background:#4a4a4a;"></div>
<div style="position:absolute;left:500.5px;top:26.07px;height:13px;line-height:13px;font-size:9.5px;color:#d0d0d0;font-weight:normal;white-space:nowrap;transform:scaleX(0.798);transform-origin:0 50%;">Außerh. lieg. Pixel löschen</div>
<div style="position:absolute;left:603px;top:28px;width:8px;height:8px;background:transparent;border:1px solid #6e6e6e;border-radius:1.5px;background:#4a4a4a;"></div>
<div style="position:absolute;left:613.6px;top:26.07px;height:13px;line-height:13px;font-size:9.5px;color:#d0d0d0;font-weight:normal;white-space:nowrap;transform:scaleX(0.828);transform-origin:0 50%;">Inhaltsbasiert</div>
<svg style="position:absolute;left:765px;top:25px;overflow:visible;" width="17" height="15" viewBox="0 0 17 15"><path d="M4.5 5 A5 4.6 0 1 1 6 11" fill="none" stroke="#9c9c9c" stroke-width="1.4"/><path d="M2 2.5 L4.5 6.5 L7.5 3.5" fill="none" stroke="#9c9c9c" stroke-width="1.4"/><path d="M3 13.5 H14" stroke="#9c9c9c" stroke-width="1"/></svg>
<div style="position:absolute;left:1874.6px;top:22.9px;width:41.8px;height:18.3px;background:#1473e6;border-radius:9px;"></div>
<div style="position:absolute;left:1884.3px;top:25.67px;height:13px;line-height:13px;font-size:9.5px;color:#f4f8ff;font-weight:bold;white-space:nowrap;transform:scaleX(0.785);transform-origin:0 50%;">Teilen</div>
<svg style="position:absolute;left:1924px;top:25px;overflow:visible;" width="14" height="15" viewBox="0 0 14 15"><circle cx="6" cy="6" r="4.4" fill="none" stroke="#d8d8d8" stroke-width="1.3"/><path d="M9.3 9.3 L12.8 12.8" stroke="#d8d8d8" stroke-width="1.6"/></svg>
<svg style="position:absolute;left:1946px;top:26px;overflow:visible;" width="16" height="13" viewBox="0 0 16 13"><rect x="1.5" y="1.5" width="12.5" height="9.8" fill="none" stroke="#d8d8d8" stroke-width="1.1"/><rect x="2.8" y="3.5" width="2" height="4.5" fill="#d8d8d8"/><path d="M1.5 3 H14" stroke="#d8d8d8" stroke-width="0.8"/></svg>
<svg style="position:absolute;left:1967px;top:30px;overflow:visible;" width="7" height="5" viewBox="0 0 7 5"><path d="M1 1 L3.5 3.5 L6 1" fill="none" stroke="#a0a0a0" stroke-width="1"/></svg>
<div style="position:absolute;left:557.3px;top:143.5px;width:529.5px;height:728.8px;background:linear-gradient(180deg,#9d9c99 0%,#a7a7a5 4.8%,#bcbcbb 14.3%,#cfcfcf 24%,#dedede 33.4%,#efefef 43%,#f8f8f8 49%,#fdfdfd 54.4%,#ffffff 60%);"></div>
<svg style="position:absolute;left:557px;top:143px;overflow:visible;" width="531.5" height="730.8" viewBox="0 0 531.5 730.8"><defs><filter id="blur1" x="-50%" y="-50%" width="200%" height="200%"><feGaussianBlur stdDeviation="22"/></filter><filter id="blur2b" x="-80%" y="-80%" width="260%" height="260%"><feGaussianBlur stdDeviation="17"/></filter><filter id="blur2" x="-50%" y="-50%" width="200%" height="200%"><feGaussianBlur stdDeviation="6"/></filter><filter id="blur3" x="-50%" y="-50%" width="200%" height="200%"><feGaussianBlur stdDeviation="1.2"/></filter><linearGradient id="roofd" gradientUnits="userSpaceOnUse" x1="171" y1="162" x2="189" y2="179.5"><stop offset="0" stop-color="#004a66"/><stop offset="0.45" stop-color="#00324a"/><stop offset="1" stop-color="#002a3b"/></linearGradient><linearGradient id="lface" x1="0" y1="0" x2="0" y2="1"><stop offset="0" stop-color="#004e72"/><stop offset="1" stop-color="#005078"/></linearGradient></defs><ellipse cx="243" cy="647" rx="130" ry="45" transform="rotate(18 243 647)" fill="#000" opacity="0.09" filter="url(#blur1)"/><ellipse cx="180" cy="645" rx="85" ry="28" transform="rotate(28 180 645)" fill="#000" opacity="0.5" filter="url(#blur2b)"/><polygon points="146.0,187.4 258.0,195.6 264.5,666.0 163.5,599.2" fill="url(#lface)" stroke="#004e72" stroke-width="0.5"/><polygon points="258.0,195.6 389.0,188.0 373.0,602.6 264.5,666.0" fill="#0090ce" /><path d="M195.3 95.0 L329.0 98.0 L329.0 123.0 Q330.0 133.0 336.0 139.0 L389.0 188.0 L258.0 195.6 L195.3 135.4 Z" fill="#0090cc"/><polygon points="195.3,95.0 329.0,98.0 329.0,123.0 195.3,135.0" fill="#008bc6" opacity="0.6"/><polygon points="146.0,187.4 195.5,136.0 258.0,195.6" fill="url(#roofd)" stroke="#002c40" stroke-width="0.5"/><ellipse cx="283" cy="165" rx="32" ry="14" transform="rotate(22 283 165)" fill="#004466" opacity="0.55" filter="url(#blur2)"/><g transform="translate(305 140.5) rotate(19.7)"><defs><linearGradient id="capside" x1="0" y1="0" x2="1" y2="0"><stop offset="0" stop-color="#1c2c7c"/><stop offset="0.5" stop-color="#1f3188"/><stop offset="1" stop-color="#2a44b0"/></linearGradient><linearGradient id="captop" x1="0" y1="0" x2="1" y2="0"><stop offset="0" stop-color="#2a4ccc"/><stop offset="1" stop-color="#3a5ad2"/></linearGradient></defs><ellipse cx="-0.45" cy="22.5" rx="31.5" ry="12.5" fill="url(#capside)" stroke="#3aa0c8" stroke-width="0.6" stroke-opacity="0.6"/><path d="M-31.3 0 L-31.9 22.5 L31.1 22.5 L31.3 0 Z" fill="url(#capside)"/><ellipse cx="0" cy="0" rx="31.3" ry="12.2" fill="url(#captop)"/></g><polygon points="161.6,316.3 200.6,326.9 206.6,553.8 169.7,533.4" fill="#939393" /><polygon points="204.1,327.6 247.7,338.5 251.3,578.4 210.8,557.3" fill="#939393" /><polygon points="170.4,553.0 252.3,600.2 252.3,617.8 170.4,569.6" fill="#939393" /><ellipse cx="327.6" cy="253" rx="23.8" ry="39" fill="#ffffff"/><polygon points="268.9,336.8 342.9,323.8 342.9,361.7 269.8,377.5" fill="#ffffff" /><ellipse cx="362.29999999999995" cy="338.6" rx="13.5" ry="22.2" transform="rotate(8 362.29999999999995 338.6)" fill="#ffffff"/><polygon points="270.7,389.5 372.5,365.8 372.5,379.3 270.7,403.9" fill="#ffffff" /><polygon points="271.1,409.8 371.6,385.2 371.6,397.8 271.1,424.6" fill="#ffffff" /><polygon points="288.0,464.4 369.7,440.4 369.7,444.5 288.0,469.6" fill="#ffffff" /><polygon points="288.0,471.0 369.7,445.5 369.7,449.6 288.0,476.2" fill="#ffffff" /><polygon points="288.0,477.6 369.7,450.7 369.7,454.8 288.0,482.8" fill="#ffffff" /><polygon points="288.0,484.2 369.7,455.8 369.7,459.9 288.0,489.4" fill="#ffffff" /></svg>
<div style="position:absolute;left:556.0999999999999px;top:142.3px;width:531.9px;height:731.1999999999999px;background:transparent;border:1.2px solid #7a7a7a;box-shadow:0 0 0 0.8px #1c1c1c;"></div>
<svg style="position:absolute;left:0;top:0;overflow:visible" width="1" height="1"><path d="M554.50 140.00 L574.20 140.00 L574.20 144.70 L559.20 144.70 L559.20 159.70 L554.50 159.70 Z" fill="#141414" opacity="0.9"/><path d="M1090.90 140.00 L1071.20 140.00 L1071.20 144.70 L1086.20 144.70 L1086.20 159.70 L1090.90 159.70 Z" fill="#141414" opacity="0.9"/><path d="M554.50 876.70 L574.20 876.70 L574.20 872.00 L559.20 872.00 L559.20 857.00 L554.50 857.00 Z" fill="#141414" opacity="0.9"/><path d="M1090.90 876.70 L1071.20 876.70 L1071.20 872.00 L1086.20 872.00 L1086.20 857.00 L1090.90 857.00 Z" fill="#141414" opacity="0.9"/><path d="M804.10 140.00 L841.90 140.00 L841.90 144.70 L804.10 144.70 Z" fill="#141414" opacity="0.9"/><path d="M804.10 872.00 L841.90 872.00 L841.90 876.70 L804.10 876.70 Z" fill="#141414" opacity="0.9"/><path d="M554.50 489.10 L559.20 489.10 L559.20 527.60 L554.50 527.60 Z" fill="#141414" opacity="0.9"/><path d="M1086.20 489.10 L1090.90 489.10 L1090.90 527.60 L1086.20 527.60 Z" fill="#141414" opacity="0.9"/><path d="M555.40 140.90 L574.20 140.90 L574.20 144.70 L559.20 144.70 L559.20 159.70 L555.40 159.70 Z" fill="#ffffff"/><path d="M1090.00 140.90 L1071.20 140.90 L1071.20 144.70 L1086.20 144.70 L1086.20 159.70 L1090.00 159.70 Z" fill="#ffffff"/><path d="M555.40 875.80 L574.20 875.80 L574.20 872.00 L559.20 872.00 L559.20 857.00 L555.40 857.00 Z" fill="#ffffff"/><path d="M1090.00 875.80 L1071.20 875.80 L1071.20 872.00 L1086.20 872.00 L1086.20 857.00 L1090.00 857.00 Z" fill="#ffffff"/><path d="M805.00 140.90 L841.00 140.90 L841.00 144.70 L805.00 144.70 Z" fill="#ffffff"/><path d="M805.00 872.00 L841.00 872.00 L841.00 875.80 L805.00 875.80 Z" fill="#ffffff"/><path d="M555.40 490.00 L559.20 490.00 L559.20 526.70 L555.40 526.70 Z" fill="#ffffff"/><path d="M1086.20 490.00 L1090.00 490.00 L1090.00 526.70 L1086.20 526.70 Z" fill="#ffffff"/></svg>
<svg style="position:absolute;left:813.6px;top:499px;overflow:visible;" width="20" height="20" viewBox="0 0 20 20"><defs><clipPath id="chR"><rect x="12.9" y="0" width="10" height="20"/></clipPath><clipPath id="chL"><rect x="0" y="0" width="12.9" height="20"/></clipPath></defs><g clip-path="url(#chL)" stroke="#dff0f6" stroke-width="1.3" fill="none"><circle cx="10" cy="10" r="4.3"/><path d="M10 1 V5.7 M10 14.3 V19 M1 10 H5.7 M14.3 10 H19"/></g><g clip-path="url(#chR)" stroke="#1a1a1a" stroke-width="1.3" fill="none"><circle cx="10" cy="10" r="4.3"/><path d="M14.3 10 H19"/></g><rect x="9.4" y="9.4" width="1.2" height="1.2" fill="#cfe6ee"/></svg>
<div style="position:absolute;left:1150.8px;top:0px;width:80px;height:80px;background:linear-gradient(180deg,#bdbdbd 0%,#b7b7b7 60%,#b2b2b2 100%);border-radius:0 0 0 40px;"></div>
<svg style="position:absolute;left:1159.8px;top:9.6px;overflow:visible;" width="60" height="60" viewBox="0 0 60 60"><g transform="translate(30 30)"><circle r="26" fill="#d6d6d6"/><circle r="26" fill="none" stroke="#1577b5" stroke-width="4"/><line x1="8.50" y1="0.00" x2="25.00" y2="0.00" stroke="#1577b5" stroke-width="3.6"/><line x1="6.01" y1="6.01" x2="17.68" y2="17.68" stroke="#1577b5" stroke-width="3.6"/><line x1="0.00" y1="8.50" x2="0.00" y2="25.00" stroke="#1577b5" stroke-width="3.6"/><line x1="-6.01" y1="6.01" x2="-17.68" y2="17.68" stroke="#1577b5" stroke-width="3.6"/><line x1="-8.50" y1="0.00" x2="-25.00" y2="0.00" stroke="#1577b5" stroke-width="3.6"/><line x1="-6.01" y1="-6.01" x2="-17.68" y2="-17.68" stroke="#1577b5" stroke-width="3.6"/><line x1="-0.00" y1="-8.50" x2="-0.00" y2="-25.00" stroke="#1577b5" stroke-width="3.6"/><line x1="6.01" y1="-6.01" x2="17.68" y2="-17.68" stroke="#1577b5" stroke-width="3.6"/><circle r="10.2" fill="#1577b5"/><circle r="7.4" fill="#d6d6d6"/></g></svg>
<div style="position:absolute;left:1150.9px;top:67.8px;width:1px;height:13px;background:#9a9a9a;"></div>
<div style="position:absolute;left:1152.6px;top:69.36px;height:12px;line-height:12px;font-size:8.8px;color:#e4e4e4;font-weight:normal;white-space:nowrap;transform:scaleX(0.867);transform-origin:0 50%;">1150</div>
<div style="position:absolute;left:1201px;top:19.4px;width:264.3px;height:323px;background:#fdfdfd;border:1px solid #8f8f8f;"></div>
<div style="position:absolute;left:1202px;top:20.4px;width:30px;height:321px;background:linear-gradient(90deg,#f1f1f1,#f4f4f4);"></div>
<div style="position:absolute;left:1242px;top:52.6px;width:221px;height:1.2px;background:#c4c4c4;"></div>
<div style="position:absolute;left:1242px;top:281.5px;width:221px;height:1.2px;background:#c4c4c4;"></div>
<div style="position:absolute;left:1245.5px;top:24.13px;height:22px;line-height:22px;font-size:15.5px;color:#151515;font-weight:normal;white-space:nowrap;transform:scaleX(0.904);transform-origin:0 50%;-webkit-text-stroke:0.25px #151515;">SAP ECTR öffnen</div>
<div style="position:absolute;left:1245.5px;top:59.03px;height:22px;line-height:22px;font-size:15.5px;color:#151515;font-weight:normal;white-space:nowrap;transform:scaleX(0.974);transform-origin:0 50%;-webkit-text-stroke:0.25px #151515;">Neu</div>
<div style="position:absolute;left:1245.5px;top:86.73px;height:22px;line-height:22px;font-size:15.5px;color:#151515;font-weight:normal;white-space:nowrap;transform:scaleX(0.940);transform-origin:0 50%;-webkit-text-stroke:0.25px #151515;">Sichern</div>
<div style="position:absolute;left:1245.5px;top:114.43px;height:22px;line-height:22px;font-size:15.5px;color:#151515;font-weight:normal;white-space:nowrap;transform:scaleX(0.952);transform-origin:0 50%;-webkit-text-stroke:0.25px #151515;">Sichern &amp; Schließen</div>
<div style="position:absolute;left:1245.5px;top:142.13px;height:22px;line-height:22px;font-size:15.5px;color:#151515;font-weight:normal;white-space:nowrap;transform:scaleX(0.970);transform-origin:0 50%;-webkit-text-stroke:0.25px #151515;">Sichern &amp; Anzeigen</div>
<div style="position:absolute;left:1245.5px;top:169.83px;height:22px;line-height:22px;font-size:15.5px;color:#151515;font-weight:normal;white-space:nowrap;transform:scaleX(0.940);transform-origin:0 50%;-webkit-text-stroke:0.25px #151515;">Sichern Als...</div>
<div style="position:absolute;left:1245.5px;top:197.13px;height:22px;line-height:22px;font-size:15.5px;color:#151515;font-weight:normal;white-space:nowrap;transform:scaleX(0.944);transform-origin:0 50%;-webkit-text-stroke:0.25px #151515;">Bearbeiten</div>
<div style="position:absolute;left:1245.5px;top:224.83px;height:22px;line-height:22px;font-size:15.5px;color:#151515;font-weight:normal;white-space:nowrap;transform:scaleX(0.978);transform-origin:0 50%;-webkit-text-stroke:0.25px #151515;">Abbrechen</div>
<div style="position:absolute;left:1245.5px;top:252.53px;height:22px;line-height:22px;font-size:15.5px;color:#151515;font-weight:normal;white-space:nowrap;transform:scaleX(0.981);transform-origin:0 50%;-webkit-text-stroke:0.25px #151515;">Zu Objektliste hinzufügen</div>
<div style="position:absolute;left:1245.5px;top:287.73px;height:22px;line-height:22px;font-size:15.5px;color:#151515;font-weight:normal;white-space:nowrap;transform:scaleX(0.964);transform-origin:0 50%;-webkit-text-stroke:0.25px #151515;">Einstellungen</div>
<div style="position:absolute;left:1245.5px;top:315.13px;height:22px;line-height:22px;font-size:15.5px;color:#151515;font-weight:normal;white-space:nowrap;transform:scaleX(1.037);transform-origin:0 50%;-webkit-text-stroke:0.25px #151515;">Info</div>
<svg style="position:absolute;left:1444px;top:178px;overflow:visible;" width="8" height="10" viewBox="0 0 8 10"><path d="M1 0.5 L6.5 4.8 L1 9.2 Z" fill="#202020"/></svg>
<svg style="position:absolute;left:3px;top:47px;overflow:visible;" width="10" height="7" viewBox="0 0 10 7"><path d="M1 1 L3.5 3.5 L1 6 M5 1 L7.5 3.5 L5 6" fill="none" stroke="#cfcfcf" stroke-width="0.9"/></svg>
<div style="position:absolute;left:12px;top:57px;width:14px;height:1.5px;background:repeating-linear-gradient(90deg,#5e5e5e 0 1px,transparent 1px 2px);"></div>
<svg style="position:absolute;left:7.0px;top:69.8px;overflow:visible;" width="16" height="16" viewBox="0 0 16 16"><path d="M8 1.5 V14.5 M1.5 8 H14.5" stroke="#d4d4d4" stroke-width="1.3"/><path d="M8 0.5 L5.8 3.3 H10.2Z M8 15.5 L5.8 12.7 H10.2Z M0.5 8 L3.3 5.8 V10.2Z M15.5 8 L12.7 5.8 V10.2Z" fill="#d4d4d4"/></svg>
<svg style="position:absolute;left:7.0px;top:89.8px;overflow:visible;" width="16" height="16" viewBox="0 0 16 16"><rect x="2" y="3" width="12" height="10" rx="1.5" fill="none" stroke="#d4d4d4" stroke-width="1.3" stroke-dasharray="2.2 1.6"/></svg>
<svg style="position:absolute;left:22px;top:102px;overflow:visible;" width="4" height="4" viewBox="0 0 4 4"><path d="M3.5 0.5 V3.5 H0.5 Z" fill="#c8c8c8"/></svg>
<svg style="position:absolute;left:7.0px;top:109.0px;overflow:visible;" width="16" height="16" viewBox="0 0 16 16"><ellipse cx="8.5" cy="6.5" rx="6" ry="4" fill="none" stroke="#d4d4d4" stroke-width="1.2"/><path d="M4 9.5 Q2 12 5 12.5 Q6 13.5 4.5 15" fill="none" stroke="#d4d4d4" stroke-width="1.1"/></svg>
<svg style="position:absolute;left:22px;top:122px;overflow:visible;" width="4" height="4" viewBox="0 0 4 4"><path d="M3.5 0.5 V3.5 H0.5 Z" fill="#c8c8c8"/></svg>
<svg style="position:absolute;left:7.0px;top:129.0px;overflow:visible;" width="16" height="16" viewBox="0 0 16 16"><path d="M6 4 Q2 4 2 8.5 Q2 13 6 13" fill="none" stroke="#d4d4d4" stroke-width="1.2" stroke-dasharray="1.6 1.2"/><path d="M14.5 1.5 L8.5 9.5" stroke="#d4d4d4" stroke-width="2.2"/><ellipse cx="8" cy="11" rx="2.3" ry="1.8" fill="#d4d4d4"/></svg>
<svg style="position:absolute;left:22px;top:142px;overflow:visible;" width="4" height="4" viewBox="0 0 4 4"><path d="M3.5 0.5 V3.5 H0.5 Z" fill="#c8c8c8"/></svg>
<svg style="position:absolute;left:7.0px;top:148.0px;overflow:visible;" width="16" height="16" viewBox="0 0 16 16"><path d="M13.5 2.5 L3 13" stroke="#d4d4d4" stroke-width="3.4"/><path d="M12 4 L4.2 11.8" stroke="#535353" stroke-width="1.4"/><path d="M10 2 L14 6" stroke="#d4d4d4" stroke-width="2"/><rect x="1" y="1" width="3" height="3" fill="#bdbdbd"/></svg>
<svg style="position:absolute;left:7.0px;top:169.0px;overflow:visible;" width="16" height="16" viewBox="0 0 16 16"><path d="M2.5 13.5 L3.5 10 L11.5 2 L14 4.5 L6 12.5 Z" fill="none" stroke="#d4d4d4" stroke-width="1.2"/><path d="M10 3.5 L12.5 6" stroke="#d4d4d4" stroke-width="1"/></svg>
<svg style="position:absolute;left:22px;top:182px;overflow:visible;" width="4" height="4" viewBox="0 0 4 4"><path d="M3.5 0.5 V3.5 H0.5 Z" fill="#c8c8c8"/></svg>
<svg style="position:absolute;left:7.0px;top:189.7px;overflow:visible;" width="16" height="16" viewBox="0 0 16 16"><circle cx="8" cy="4" r="2.6" fill="#d4d4d4"/><rect x="6.8" y="5.5" width="2.4" height="4" fill="#d4d4d4"/><rect x="2" y="9" width="12" height="3" rx="0.8" fill="#d4d4d4"/><rect x="2" y="13" width="12" height="1.2" fill="#d4d4d4"/></svg>
<svg style="position:absolute;left:22px;top:203px;overflow:visible;" width="4" height="4" viewBox="0 0 4 4"><path d="M3.5 0.5 V3.5 H0.5 Z" fill="#c8c8c8"/></svg>
<svg style="position:absolute;left:7.0px;top:210.5px;overflow:visible;" width="16" height="16" viewBox="0 0 16 16"><path d="M2 10.5 L8.5 4 L12 7.5 L5.5 14 L3.5 14 Z" fill="none" stroke="#d4d4d4" stroke-width="1.2"/><path d="M8.5 4 L10.5 2 L14 5.5 L12 7.5 Z" fill="#d4d4d4"/><path d="M8 14 H14.5" stroke="#d4d4d4" stroke-width="1"/></svg>
<svg style="position:absolute;left:22px;top:223px;overflow:visible;" width="4" height="4" viewBox="0 0 4 4"><path d="M3.5 0.5 V3.5 H0.5 Z" fill="#c8c8c8"/></svg>
<svg style="position:absolute;left:7.0px;top:230.7px;overflow:visible;" width="16" height="16" viewBox="0 0 16 16"><path d="M3.5 7.5 L8.5 3 L13.2 8.2 L8.2 12.7 Z" fill="none" stroke="#d4d4d4" stroke-width="1.2"/><path d="M5.6 9.6 L10.6 5.4 L13.2 8.2 L8.2 12.7 Z" fill="#d4d4d4"/><circle cx="13.8" cy="11.6" r="1.5" fill="#d4d4d4"/><rect x="1.5" y="1" width="3.5" height="3.5" fill="#a8a8a8"/><path d="M1.5 2.7 H5" stroke="#707070" stroke-width="0.6"/></svg>
<svg style="position:absolute;left:7.0px;top:251.0px;overflow:visible;" width="16" height="16" viewBox="0 0 16 16"><path d="M2.5 2.5 H13.5 V5 M2.5 2.5 V5 M8 2.5 V13.5 M5.5 13.5 H10.5" fill="none" stroke="#d4d4d4" stroke-width="1.6"/></svg>
<svg style="position:absolute;left:22px;top:264px;overflow:visible;" width="4" height="4" viewBox="0 0 4 4"><path d="M3.5 0.5 V3.5 H0.5 Z" fill="#c8c8c8"/></svg>
<svg style="position:absolute;left:7.0px;top:271.5px;overflow:visible;" width="16" height="16" viewBox="0 0 16 16"><path d="M3 13 L4 7 L9 2.5 L13.5 7 L9 12 Z" fill="none" stroke="#d4d4d4" stroke-width="1.2"/><path d="M3 13 L7.5 8.5" stroke="#d4d4d4" stroke-width="1"/><circle cx="8" cy="8" r="1" fill="#d4d4d4"/></svg>
<svg style="position:absolute;left:22px;top:285px;overflow:visible;" width="4" height="4" viewBox="0 0 4 4"><path d="M3.5 0.5 V3.5 H0.5 Z" fill="#c8c8c8"/></svg>
<svg style="position:absolute;left:7.0px;top:291.7px;overflow:visible;" width="16" height="16" viewBox="0 0 16 16"><path d="M4 2 L12.5 9.5 L8.5 9.8 L10.5 14 L9 14.8 L7 10.5 L4 13 Z" fill="#d4d4d4"/></svg>
<svg style="position:absolute;left:22px;top:305px;overflow:visible;" width="4" height="4" viewBox="0 0 4 4"><path d="M3.5 0.5 V3.5 H0.5 Z" fill="#c8c8c8"/></svg>
<svg style="position:absolute;left:7.0px;top:311.5px;overflow:visible;" width="16" height="16" viewBox="0 0 16 16"><path d="M3 13.5 L13 3.5" stroke="#d4d4d4" stroke-width="1.3"/></svg>
<svg style="position:absolute;left:22px;top:325px;overflow:visible;" width="4" height="4" viewBox="0 0 4 4"><path d="M3.5 0.5 V3.5 H0.5 Z" fill="#c8c8c8"/></svg>
<svg style="position:absolute;left:7.0px;top:331.0px;overflow:visible;" width="16" height="16" viewBox="0 0 16 16"><path d="M4 8 V4.5 Q4 3.5 5 3.5 Q6 3.5 6 4.5 V7 V3 Q6 2 7 2 Q8 2 8 3 V7 V3.5 Q8 2.5 9 2.5 Q10 2.5 10 3.5 V7.5 V5 Q10 4 11 4 Q12 4 12 5 V10 Q12 14.5 8 14.5 Q5.5 14.5 4 12 L1.8 9 Q1.5 8 2.5 7.8 Q3.3 7.8 4 9 Z" fill="#d4d4d4"/></svg>
<svg style="position:absolute;left:22px;top:344px;overflow:visible;" width="4" height="4" viewBox="0 0 4 4"><path d="M3.5 0.5 V3.5 H0.5 Z" fill="#c8c8c8"/></svg>
<svg style="position:absolute;left:7.0px;top:350.4px;overflow:visible;" width="16" height="16" viewBox="0 0 16 16"><circle cx="6.8" cy="6.8" r="4.6" fill="none" stroke="#d4d4d4" stroke-width="1.3"/><path d="M10.2 10.2 L14 14" stroke="#d4d4d4" stroke-width="1.8"/></svg>
<div style="position:absolute;left:4px;top:370px;width:23px;height:17.6px;background:#393939;border-radius:1px;"></div>
<svg style="position:absolute;left:7.0px;top:371.0px;overflow:visible;" width="16" height="16" viewBox="0 0 16 16"><path d="M4.5 1.5 V11.5 H14" fill="none" stroke="#d4d4d4" stroke-width="1.3"/><path d="M1.5 4.5 H11.5 V14.5" fill="none" stroke="#d4d4d4" stroke-width="1.3"/><rect x="13" y="10.5" width="1.6" height="1.6" fill="#d4d4d4"/></svg>
<svg style="position:absolute;left:22px;top:383px;overflow:visible;" width="4" height="4" viewBox="0 0 4 4"><path d="M3.5 0.5 V3.5 H0.5 Z" fill="#c8c8c8"/></svg>
<div style="position:absolute;left:4px;top:394px;width:5.5px;height:5.5px;background:#111;border:1px solid #ddd;"></div>
<div style="position:absolute;left:7px;top:397px;width:5.5px;height:5.5px;background:#eee;border:1px solid #777;"></div>
<svg style="position:absolute;left:16px;top:393px;overflow:visible;" width="10" height="10" viewBox="0 0 10 10"><path d="M2 2.5 H7 V7.5" fill="none" stroke="#d4d4d4" stroke-width="1"/><path d="M0.5 2.5 L2.5 0.8 V4.2Z M7 9.5 L5.3 7.5 H8.7Z" fill="#d4d4d4"/></svg>
<div style="position:absolute;left:12.2px;top:413.9px;width:13.8px;height:14.1px;background:#4ab52e;border:1px solid #f0f0f0;box-shadow:0 0 0 1px #2a2a2a;"></div>
<div style="position:absolute;left:4.6px;top:406.2px;width:14.2px;height:13.8px;background:#0090d0;border:1px solid #f0f0f0;box-shadow:0 0 0 1px #2a2a2a;"></div>
<svg style="position:absolute;left:7.0px;top:434.5px;overflow:visible;" width="16" height="16" viewBox="0 0 16 16"><rect x="1.5" y="3" width="13" height="10" fill="none" stroke="#d4d4d4" stroke-width="1.1"/><circle cx="8" cy="8" r="3.3" fill="none" stroke="#bdbdbd" stroke-width="1" stroke-dasharray="1.5 0.8"/></svg>
<svg style="position:absolute;left:7.0px;top:454.0px;overflow:visible;" width="16" height="16" viewBox="0 0 16 16"><rect x="5" y="2.5" width="9.5" height="7" fill="none" stroke="#d4d4d4" stroke-width="1.1"/><rect x="1.5" y="5.5" width="9.5" height="7" fill="#535353" stroke="#d4d4d4" stroke-width="1.1"/></svg>
<svg style="position:absolute;left:22px;top:467px;overflow:visible;" width="4" height="4" viewBox="0 0 4 4"><path d="M3.5 0.5 V3.5 H0.5 Z" fill="#c8c8c8"/></svg>
<div style="position:absolute;left:40.5px;top:50.45px;height:12px;line-height:12px;font-size:8.5px;color:#f0f0f0;font-weight:bold;white-space:nowrap;transform:scaleX(1.002);transform-origin:0 50%;">10000373803aps00000.psd bei 100% (Shadow, RGB/8)</div>
<svg style="position:absolute;left:264px;top:53px;overflow:visible;" width="7" height="7" viewBox="0 0 7 7"><path d="M1 1 L6 6 M6 1 L1 6" stroke="#bdbdbd" stroke-width="1"/></svg>
<svg style="position:absolute;left:1602px;top:73px;overflow:visible;" width="9" height="6" viewBox="0 0 9 6"><path d="M1 5 L4.5 1.5 L8 5" fill="none" stroke="#8a8a8a" stroke-width="1"/></svg>
<svg style="position:absolute;left:1602px;top:925px;overflow:visible;" width="9" height="6" viewBox="0 0 9 6"><path d="M1 1 L4.5 4.5 L8 1" fill="none" stroke="#8a8a8a" stroke-width="1"/></svg>
<div style="position:absolute;left:40.5px;top:937.24px;height:11px;line-height:11px;font-size:8px;color:#cfcfcf;font-weight:normal;white-space:nowrap;transform:scaleX(1.002);transform-origin:0 50%;">100%</div>
<div style="position:absolute;left:79px;top:937.24px;height:11px;line-height:11px;font-size:8px;color:#cfcfcf;font-weight:normal;white-space:nowrap;transform:scaleX(0.943);transform-origin:0 50%;">1027 Px x 1417 Px (118,11 ppcm)</div>
<svg style="position:absolute;left:203px;top:938px;overflow:visible;" width="6" height="9" viewBox="0 0 6 9"><path d="M1.5 1 L4.5 4.5 L1.5 8" fill="none" stroke="#b0b0b0" stroke-width="0.9"/></svg>
<svg style="position:absolute;left:217px;top:939px;overflow:visible;" width="5" height="7" viewBox="0 0 5 7"><path d="M4 1 L1.2 3.5 L4 6" fill="none" stroke="#8c8c8c" stroke-width="0.9"/></svg>
<svg style="position:absolute;left:1590px;top:938px;overflow:visible;" width="6" height="9" viewBox="0 0 6 9"><path d="M1.5 1 L4.5 4.5 L1.5 8" fill="none" stroke="#8c8c8c" stroke-width="0.9"/></svg>
<div style="position:absolute;left:1600px;top:936px;width:12.3px;height:12px;background:#4e4e4e;"></div>
<div style="position:absolute;left:39.5px;top:953.65px;height:12px;line-height:12px;font-size:8.5px;color:#f0f0f0;font-weight:bold;white-space:nowrap;transform:scaleX(0.917);transform-origin:0 50%;">Zeitleiste</div>
<div style="position:absolute;left:1600.5px;top:957.5px;width:8px;height:6px;background:linear-gradient(180deg,#9c9c9c 0 45%,#7c7c7c 45% 55%,#9c9c9c 55% 100%);"></div>
<svg style="position:absolute;left:38px;top:981px;overflow:visible;" width="12" height="11" viewBox="0 0 12 11"><rect x="2" y="1.5" width="1.4" height="8" fill="#b8b8b8"/><path d="M10 1.5 V9.5 L4.5 5.5Z" fill="#b8b8b8"/></svg>
<svg style="position:absolute;left:62px;top:981px;overflow:visible;" width="12" height="11" viewBox="0 0 12 11"><path d="M7 1.5 V9.5 L1.5 5.5Z" fill="#b8b8b8"/><rect x="8.5" y="1.5" width="1.4" height="8" fill="#b8b8b8"/></svg>
<svg style="position:absolute;left:87px;top:980px;overflow:visible;" width="12" height="12" viewBox="0 0 12 12"><path d="M2.5 1 V11 L10 6Z" fill="#b8b8b8"/></svg>
<svg style="position:absolute;left:110px;top:981px;overflow:visible;" width="12" height="11" viewBox="0 0 12 11"><rect x="2" y="1.5" width="1.4" height="8" fill="#b8b8b8"/><path d="M4.5 1.5 V9.5 L10 5.5Z" fill="#b8b8b8"/></svg>
<svg style="position:absolute;left:133px;top:981px;overflow:visible;" width="12" height="11" viewBox="0 0 12 11"><path d="M1.5 3.8 H4 L7.5 1 V10 L4 7.2 H1.5Z" fill="#b8b8b8"/></svg>
<svg style="position:absolute;left:156.5px;top:980px;overflow:visible;" width="15" height="15" viewBox="0 0 15 15"><path d="M10.31 5.66 L11.43 5.64 L11.43 7.36 L10.31 7.34 L9.78 8.60 L10.59 9.38 L9.38 10.59 L8.60 9.78 L7.34 10.31 L7.36 11.43 L5.64 11.43 L5.66 10.31 L4.40 9.78 L3.62 10.59 L2.41 9.38 L3.22 8.60 L2.69 7.34 L1.57 7.36 L1.57 5.64 L2.69 5.66 L3.22 4.40 L2.41 3.62 L3.62 2.41 L4.40 3.22 L5.66 2.69 L5.64 1.57 L7.36 1.57 L7.34 2.69 L8.60 3.22 L9.38 2.41 L10.59 3.62 L9.78 4.40 Z" fill="#b8b8b8"/><circle cx="6.5" cy="6.5" r="1.6" fill="#535353"/><rect x="12" y="12" width="1" height="1" fill="#999"/></svg>
<div style="position:absolute;left:178.2px;top:974px;width:1px;height:26px;background:#3c3c3c;"></div>
<svg style="position:absolute;left:185px;top:980px;overflow:visible;" width="14" height="12" viewBox="0 0 14 12"><circle cx="3" cy="3" r="2" fill="none" stroke="#b8b8b8" stroke-width="1"/><circle cx="3" cy="9" r="2" fill="none" stroke="#b8b8b8" stroke-width="1"/><path d="M4.6 4.2 L13 9.5 M4.6 7.8 L13 2.5" stroke="#b8b8b8" stroke-width="1"/></svg>
<svg style="position:absolute;left:211px;top:980px;overflow:visible;" width="12" height="12" viewBox="0 0 12 12"><rect x="1" y="1" width="10" height="10" fill="none" stroke="#b8b8b8" stroke-width="1"/><path d="M11 1 V11 H1Z" fill="#b8b8b8"/></svg>
<div style="position:absolute;left:236.8px;top:973px;width:1px;height:27px;background:#3c3c3c;"></div>
<div style="position:absolute;left:1578.5px;top:972px;width:1px;height:28px;background:#3c3c3c;"></div>
<div style="position:absolute;left:759px;top:1025px;width:111px;height:16px;background:#3f3f3f;border-radius:2px;border:1px solid #393939;"></div>
<div style="position:absolute;left:769.5px;top:1027.15px;height:12px;line-height:12px;font-size:8.5px;color:#e0e0e0;font-weight:normal;white-space:nowrap;transform:scaleX(0.893);transform-origin:0 50%;">Frame-Animation erstellen</div>
<div style="position:absolute;left:873px;top:1025px;width:13.5px;height:16px;background:#3f3f3f;border-radius:2px;"></div>
<svg style="position:absolute;left:875px;top:1030px;overflow:visible;" width="10" height="6" viewBox="0 0 10 6"><path d="M1.5 1 L5 4.5 L8.5 1" fill="none" stroke="#c0c0c0" stroke-width="1"/></svg>
<svg style="position:absolute;left:36px;top:1070px;overflow:visible;" width="15" height="7" viewBox="0 0 15 7"><rect x="1" y="1" width="3.5" height="4.5" fill="none" stroke="#a8a8a8" stroke-width="0.9"/><rect x="5.8" y="1" width="3.5" height="4.5" fill="none" stroke="#a8a8a8" stroke-width="0.9"/><rect x="10.6" y="1" width="3.5" height="4.5" fill="none" stroke="#a8a8a8" stroke-width="0.9"/></svg>
<svg style="position:absolute;left:60px;top:1067px;overflow:visible;" width="12" height="11" viewBox="0 0 12 11"><path d="M1.5 10 Q2 4.5 8 4.5" fill="none" stroke="#bdbdbd" stroke-width="1.6"/><path d="M7 1.5 L11 4.5 L7 7.5Z" fill="#bdbdbd"/></svg>
<svg style="position:absolute;left:244px;top:1071px;overflow:visible;" width="9" height="6" viewBox="0 0 9 6"><path d="M0.5 5.5 L3 2.5 L4.5 4 L6 1.5 L8.5 5.5Z" fill="#b8b8b8"/></svg>
<div style="position:absolute;left:266px;top:1069.5px;width:65px;height:2.5px;background:#8f8f8f;border-radius:1px;"></div>
<svg style="position:absolute;left:341px;top:1068px;overflow:visible;" width="15" height="9" viewBox="0 0 15 9"><path d="M0.5 8.5 L5 2.5 L7.5 5 L10 1 L14.5 8.5Z" fill="#c0c0c0"/></svg>
<svg style="position:absolute;left:1757px;top:47px;overflow:visible;" width="9" height="7" viewBox="0 0 9 7"><path d="M4 1 L1.5 3.5 L4 6 M8 1 L5.5 3.5 L8 6" fill="none" stroke="#cfcfcf" stroke-width="0.9"/></svg>
<svg style="position:absolute;left:1964px;top:47px;overflow:visible;" width="9" height="7" viewBox="0 0 9 7"><path d="M1 1 L3.5 3.5 L1 6 M5 1 L7.5 3.5 L5 6" fill="none" stroke="#cfcfcf" stroke-width="0.9"/></svg>
<div style="position:absolute;left:1615.5px;top:106.5px;width:153px;height:1.8px;background:#3f3f3f;"></div>
<div style="position:absolute;left:1615.5px;top:138.6px;width:153px;height:1.8px;background:#3f3f3f;"></div>
<div style="position:absolute;left:1615.5px;top:191.6px;width:153px;height:1.8px;background:#3f3f3f;"></div>
<div style="position:absolute;left:1615.5px;top:223.2px;width:153px;height:1.8px;background:#3f3f3f;"></div>
<div style="position:absolute;left:1615.5px;top:276.2px;width:153px;height:1.8px;background:#3f3f3f;"></div>
<div style="position:absolute;left:1615.5px;top:308.2px;width:153px;height:1.8px;background:#3f3f3f;"></div>
<div style="position:absolute;left:1615.5px;top:340.2px;width:153px;height:1.8px;background:#3f3f3f;"></div>
<div style="position:absolute;left:1684px;top:57.5px;width:15px;height:1.2px;background:repeating-linear-gradient(90deg,#6a6a6a 0 1px,transparent 1px 2px);"></div>
<div style="position:absolute;left:1684px;top:110.5px;width:15px;height:1.2px;background:repeating-linear-gradient(90deg,#6a6a6a 0 1px,transparent 1px 2px);"></div>
<div style="position:absolute;left:1684px;top:142.5px;width:15px;height:1.2px;background:repeating-linear-gradient(90deg,#6a6a6a 0 1px,transparent 1px 2px);"></div>
<div style="position:absolute;left:1684px;top:195.5px;width:15px;height:1.2px;background:repeating-linear-gradient(90deg,#6a6a6a 0 1px,transparent 1px 2px);"></div>
<div style="position:absolute;left:1684px;top:227.5px;width:15px;height:1.2px;background:repeating-linear-gradient(90deg,#6a6a6a 0 1px,transparent 1px 2px);"></div>
<div style="position:absolute;left:1684px;top:280.5px;width:15px;height:1.2px;background:repeating-linear-gradient(90deg,#6a6a6a 0 1px,transparent 1px 2px);"></div>
<div style="position:absolute;left:1684px;top:312.5px;width:15px;height:1.2px;background:repeating-linear-gradient(90deg,#6a6a6a 0 1px,transparent 1px 2px);"></div>
<div style="position:absolute;left:1684px;top:344.5px;width:15px;height:1.2px;background:repeating-linear-gradient(90deg,#6a6a6a 0 1px,transparent 1px 2px);"></div>
<div style="position:absolute;left:1643.8px;top:66.66px;height:13px;line-height:13px;font-size:9px;color:#ececec;font-weight:bold;white-space:nowrap;transform:scaleX(0.874);transform-origin:0 50%;">Protokoll</div>
<div style="position:absolute;left:1643.8px;top:88.86px;height:13px;line-height:13px;font-size:9px;color:#ececec;font-weight:bold;white-space:nowrap;transform:scaleX(0.873);transform-origin:0 50%;">Aktionen</div>
<div style="position:absolute;left:1643.8px;top:120.46px;height:13px;line-height:13px;font-size:9px;color:#ececec;font-weight:bold;white-space:nowrap;transform:scaleX(0.854);transform-origin:0 50%;">Farbfelder</div>
<div style="position:absolute;left:1643.8px;top:151.96px;height:13px;line-height:13px;font-size:9px;color:#ececec;font-weight:bold;white-space:nowrap;transform:scaleX(0.838);transform-origin:0 50%;">Pinseleinstellungen</div>
<div style="position:absolute;left:1643.8px;top:173.96px;height:13px;line-height:13px;font-size:9px;color:#ececec;font-weight:bold;white-space:nowrap;transform:scaleX(0.834);transform-origin:0 50%;">Pinsel</div>
<div style="position:absolute;left:1643.8px;top:205.46px;height:13px;line-height:13px;font-size:9px;color:#ececec;font-weight:bold;white-space:nowrap;transform:scaleX(0.851);transform-origin:0 50%;">Kopierquelle</div>
<div style="position:absolute;left:1643.8px;top:237.06px;height:13px;line-height:13px;font-size:9px;color:#ececec;font-weight:bold;white-space:nowrap;transform:scaleX(0.841);transform-origin:0 50%;">Zeichen</div>
<div style="position:absolute;left:1643.8px;top:258.86px;height:13px;line-height:13px;font-size:9px;color:#ececec;font-weight:bold;white-space:nowrap;transform:scaleX(0.854);transform-origin:0 50%;">Absatz</div>
<div style="position:absolute;left:1643.8px;top:290.36px;height:13px;line-height:13px;font-size:9px;color:#ececec;font-weight:bold;white-space:nowrap;transform:scaleX(0.862);transform-origin:0 50%;">Werkzeugvorgaben</div>
<div style="position:absolute;left:1643.8px;top:321.86px;height:13px;line-height:13px;font-size:9px;color:#ececec;font-weight:bold;white-space:nowrap;transform:scaleX(0.859);transform-origin:0 50%;">Bibliotheken</div>
<svg style="position:absolute;left:1621.5px;top:63.5px;overflow:visible;" width="16" height="16" viewBox="0 0 16 16"><rect x="2" y="1.5" width="3.2" height="3.2" fill="none" stroke="#cfcfcf" stroke-width="0.9"/><rect x="2" y="6" width="3.2" height="3.2" fill="none" stroke="#cfcfcf" stroke-width="0.9"/><rect x="2" y="10.5" width="3.2" height="3.2" fill="#cfcfcf"/><path d="M9 3 L11 1.5 V4.5 Z" fill="#cfcfcf"/><path d="M10.5 3 Q14.5 3.5 13 8 Q12 10.5 9.5 11" fill="none" stroke="#cfcfcf" stroke-width="1.1"/></svg>
<svg style="position:absolute;left:1621.5px;top:85.9px;overflow:visible;" width="16" height="16" viewBox="0 0 16 16"><path d="M3 2 L13.5 8 L3 14 Z" fill="#cfcfcf"/></svg>
<svg style="position:absolute;left:1621.5px;top:117px;overflow:visible;" width="16" height="16" viewBox="0 0 16 16"><rect x="1.5" y="3" width="13" height="10" fill="none" stroke="#cfcfcf" stroke-width="1"/><path d="M1.5 6.3 H14.5 M1.5 9.6 H14.5 M4.8 3 V13 M8 3 V13 M11.2 3 V13" stroke="#cfcfcf" stroke-width="0.9"/></svg>
<svg style="position:absolute;left:1621.5px;top:149.5px;overflow:visible;" width="16" height="16" viewBox="0 0 16 16"><path d="M1.5 2.5 H3 M1.5 5 H3 M1.5 7.5 H3 M4 2.5 H5.5 M4 5 H5.5 M4 7.5 H5.5" stroke="#cfcfcf" stroke-width="1"/><path d="M14.5 2.5 L7.5 10" stroke="#cfcfcf" stroke-width="2"/><path d="M7.5 9.5 Q4 10.5 4.5 14 Q8 13.5 8.5 11 Z" fill="#cfcfcf"/></svg>
<svg style="position:absolute;left:1621.5px;top:171.5px;overflow:visible;" width="16" height="16" viewBox="0 0 16 16"><path d="M1.5 5 H7 M10 5 H14.5 M1.5 11 H9" stroke="#cfcfcf" stroke-width="1.3"/><circle cx="8.5" cy="5" r="1.8" fill="#cfcfcf"/><path d="M9 11 L14 8.5 V13.5 Z" fill="#cfcfcf"/></svg>
<svg style="position:absolute;left:1621.5px;top:202.5px;overflow:visible;" width="16" height="16" viewBox="0 0 16 16"><path d="M1.5 2.5 H3 M1.5 5 H3 M1.5 7.5 H3" stroke="#cfcfcf" stroke-width="1"/><circle cx="10" cy="4.2" r="2.4" fill="#cfcfcf"/><rect x="9" y="5.5" width="2" height="3.5" fill="#cfcfcf"/><rect x="5" y="9" width="10" height="2.6" fill="#cfcfcf"/><rect x="5" y="12.6" width="10" height="1" fill="#cfcfcf"/></svg>
<svg style="position:absolute;left:1621.5px;top:234px;overflow:visible;" width="16" height="16" viewBox="0 0 16 16"><path d="M1.5 13 L5.5 2.5 L9.5 13 M3 9.2 H8" fill="none" stroke="#cfcfcf" stroke-width="1"/><path d="M12.5 2 V14" stroke="#cfcfcf" stroke-width="1"/></svg>
<svg style="position:absolute;left:1621.5px;top:256.4px;overflow:visible;" width="16" height="16" viewBox="0 0 16 16"><path d="M8.5 2 H13 M9 2 V14 M11.5 2 V14" stroke="#cfcfcf" stroke-width="1.3"/><path d="M9 2 Q4 2 4 5.5 Q4 9 9 9 Z" fill="#cfcfcf"/></svg>
<svg style="position:absolute;left:1621.5px;top:287px;overflow:visible;" width="16" height="16" viewBox="0 0 16 16"><path d="M2 2 L13.5 13.5 M13 2 L3 12" stroke="#cfcfcf" stroke-width="1.4"/><circle cx="12.5" cy="12.5" r="2" fill="none" stroke="#cfcfcf" stroke-width="1"/><circle cx="2.5" cy="12.5" r="1.8" fill="#cfcfcf"/></svg>
<svg style="position:absolute;left:1621.5px;top:318.5px;overflow:visible;" width="16" height="16" viewBox="0 0 16 16"><rect x="2" y="2" width="12" height="12" rx="1.5" fill="none" stroke="#cfcfcf" stroke-width="1"/><rect x="4" y="4" width="8" height="8" fill="none" stroke="#cfcfcf" stroke-width="0.8"/><path d="M8 2.5 V7 L9.2 6 L10.4 7 V2.5Z" fill="#cfcfcf"/></svg>
<div style="position:absolute;left:1777.3px;top:58.55px;height:12px;line-height:12px;font-size:8.5px;color:#f0f0f0;font-weight:bold;white-space:nowrap;transform:scaleX(0.899);transform-origin:0 50%;">Farbe</div>
<div style="position:absolute;left:1965px;top:63px;width:8px;height:5.8px;background:linear-gradient(180deg,#9c9c9c 0 45%,#7c7c7c 45% 55%,#9c9c9c 55% 100%);"></div>
<div style="position:absolute;left:1786px;top:93px;width:14px;height:14px;background:#4ab52e;border:1px solid #f0f0f0;box-shadow:0 0 0 1px #333;"></div>
<div style="position:absolute;left:1778px;top:85.4px;width:14.5px;height:14.1px;background:#0090d0;border:1px solid #f0f0f0;box-shadow:0 0 0 1px #333;"></div>
<div style="position:absolute;left:1804.8px;top:81.8px;width:131.2px;height:398.8px;background:linear-gradient(180deg,rgba(0,0,0,0) 0%,#000 100%),linear-gradient(90deg,#ffffff 0%,#00b9ff 100%);"></div>
<div style="position:absolute;left:1926px;top:159px;width:10px;height:12px;background:transparent;overflow:hidden;"><svg width="12" height="12" style="position:absolute;left:2px;top:0"><circle cx="6" cy="6" r="4.2" fill="none" stroke="#ffffff" stroke-width="1"/></svg></div>
<div style="position:absolute;left:1949.2px;top:82px;width:15.1px;height:398.6px;background:linear-gradient(180deg,#ff0000 0%,#ff00ff 16.67%,#0000ff 33.33%,#00ffff 50%,#00ff00 66.67%,#ffff00 83.33%,#ff0000 100%);"></div>
<svg style="position:absolute;left:1941.5px;top:251px;overflow:visible;" width="7" height="9" viewBox="0 0 7 9"><path d="M1 1 L6 4.5 L1 8 Z" fill="#e8e8e8"/></svg>
<div style="position:absolute;left:1794.8px;top:498.5px;width:1px;height:22px;background:#3d3d3d;"></div>
<div style="position:absolute;left:1833.8px;top:498.5px;width:1px;height:22px;background:#3d3d3d;"></div>
<div style="position:absolute;left:1868.8px;top:498.5px;width:1px;height:22px;background:#3d3d3d;"></div>
<div style="position:absolute;left:1777.2px;top:502.75px;height:12px;line-height:12px;font-size:8.5px;color:#bdbdbd;font-weight:normal;white-space:nowrap;transform:scaleX(0.957);transform-origin:0 50%;">3D</div>
<div style="position:absolute;left:1802.5px;top:502.75px;height:12px;line-height:12px;font-size:8.5px;color:#bdbdbd;font-weight:normal;white-space:nowrap;transform:scaleX(0.937);transform-origin:0 50%;">Kanäle</div>
<div style="position:absolute;left:1841.3px;top:502.75px;height:12px;line-height:12px;font-size:8.5px;color:#bdbdbd;font-weight:normal;white-space:nowrap;transform:scaleX(0.950);transform-origin:0 50%;">Pfade</div>
<div style="position:absolute;left:1876.2px;top:502.75px;height:12px;line-height:12px;font-size:8.5px;color:#f2f2f2;font-weight:bold;white-space:nowrap;transform:scaleX(0.879);transform-origin:0 50%;">Ebenen</div>
<div style="position:absolute;left:1965px;top:506.5px;width:8px;height:5.8px;background:linear-gradient(180deg,#9c9c9c 0 45%,#7c7c7c 45% 55%,#9c9c9c 55% 100%);"></div>
<div style="position:absolute;left:1773.6px;top:528.3px;width:67px;height:12.4px;background:#464646;border-radius:2px;"></div>
<svg style="position:absolute;left:1777px;top:529px;overflow:visible;" width="10" height="10" viewBox="0 0 10 10"><circle cx="4" cy="4" r="2.8" fill="none" stroke="#e6e6e6" stroke-width="1.1"/><path d="M6 6 L8.8 8.8" stroke="#e6e6e6" stroke-width="1.5"/></svg>
<div style="position:absolute;left:1789.8px;top:528.45px;height:12px;line-height:12px;font-size:8.5px;color:#dedede;font-weight:normal;white-space:nowrap;transform:scaleX(0.939);transform-origin:0 50%;">Art</div>
<svg style="position:absolute;left:1833px;top:532px;overflow:visible;" width="8" height="5" viewBox="0 0 8 5"><path d="M1 1 L4 4 L7 1" fill="none" stroke="#bdbdbd" stroke-width="0.9"/></svg>
<svg style="position:absolute;left:1861px;top:529px;overflow:visible;" width="13" height="11" viewBox="0 0 13 11"><rect x="1" y="1.5" width="10.5" height="8" fill="none" stroke="#d0d0d0" stroke-width="1"/><path d="M2.5 8 L5 5 L6.5 6.5 L8 4.5 L10 8 Z" fill="#d0d0d0"/></svg>
<svg style="position:absolute;left:1879.5px;top:529px;overflow:visible;" width="11" height="11" viewBox="0 0 11 11"><circle cx="5.5" cy="5.5" r="4.3" fill="none" stroke="#d0d0d0" stroke-width="1"/><path d="M9 3 L2 8 A4.3 4.3 0 0 0 9 3Z" fill="#d0d0d0"/><path d="M5.5 1.2 A4.3 4.3 0 0 1 9.8 5.5 L5.5 5.5Z" fill="#d0d0d0"/></svg>
<svg style="position:absolute;left:1898px;top:529px;overflow:visible;" width="11" height="11" viewBox="0 0 11 11"><path d="M1 1 H10 V3 M1 1 V3 M5.5 1 V10 M3.5 10 H7.5" fill="none" stroke="#d0d0d0" stroke-width="1.3"/></svg>
<svg style="position:absolute;left:1916.5px;top:529px;overflow:visible;" width="12" height="11" viewBox="0 0 12 11"><rect x="2" y="2" width="8" height="7.5" fill="none" stroke="#d0d0d0" stroke-width="1"/><rect x="0.5" y="0.5" width="3" height="3" fill="#d0d0d0"/><rect x="8.5" y="0.5" width="3" height="3" fill="#d0d0d0"/><rect x="0.5" y="8" width="3" height="3" fill="#d0d0d0"/><rect x="8.5" y="8" width="3" height="3" fill="#d0d0d0"/></svg>
<svg style="position:absolute;left:1936px;top:529px;overflow:visible;" width="11" height="11" viewBox="0 0 11 11"><path d="M4 1 H8 L10 3 V10 H4 Z" fill="none" stroke="#d0d0d0" stroke-width="1"/><rect x="1" y="5" width="5" height="5" fill="#d0d0d0"/></svg>
<div style="position:absolute;left:1966px;top:531px;width:8px;height:11px;background:#3e3e3e;border-radius:4px;"></div>
<svg style="position:absolute;left:1965px;top:525px;overflow:visible;" width="9" height="9" viewBox="0 0 9 9"><circle cx="4.5" cy="4.5" r="3" fill="#e8e8e8"/></svg>
<div style="position:absolute;left:1770px;top:544px;width:203px;height:2px;background:#484848;"></div>
<div style="position:absolute;left:1773.6px;top:550px;width:113.3px;height:12.4px;background:#464646;border-radius:2px;"></div>
<div style="position:absolute;left:1779px;top:550.15px;height:12px;line-height:12px;font-size:8.5px;color:#dedede;font-weight:normal;white-space:nowrap;transform:scaleX(0.935);transform-origin:0 50%;">Normal</div>
<svg style="position:absolute;left:1879px;top:554px;overflow:visible;" width="8" height="5" viewBox="0 0 8 5"><path d="M1 1 L4 4 L7 1" fill="none" stroke="#bdbdbd" stroke-width="0.9"/></svg>
<div style="position:absolute;left:1893px;top:550.15px;height:12px;line-height:12px;font-size:8.5px;color:#c8c8c8;font-weight:normal;white-space:nowrap;transform:scaleX(0.931);transform-origin:0 50%;">Deckkraft:</div>
<div style="position:absolute;left:1932.8px;top:550px;width:27.8px;height:12.4px;background:#464646;border-radius:2px 0 0 2px;"></div>
<div style="position:absolute;left:1934.8px;top:550.35px;height:12px;line-height:12px;font-size:8.5px;color:#dedede;font-weight:normal;white-space:nowrap;transform:scaleX(0.938);transform-origin:0 50%;">100%</div>
<div style="position:absolute;left:1961.5px;top:550px;width:11.5px;height:12.4px;background:#464646;"></div>
<svg style="position:absolute;left:1963.5px;top:554px;overflow:visible;" width="8" height="5" viewBox="0 0 8 5"><path d="M1 1 L4 4 L7 1" fill="none" stroke="#bdbdbd" stroke-width="0.9"/></svg>
<div style="position:absolute;left:1770px;top:567px;width:203px;height:1.2px;background:#484848;"></div>
<div style="position:absolute;left:1774.5px;top:571.15px;height:12px;line-height:12px;font-size:8.5px;color:#c8c8c8;font-weight:normal;white-space:nowrap;transform:scaleX(0.884);transform-origin:0 50%;">Fixieren:</div>
<svg style="position:absolute;left:1811.5px;top:572px;overflow:visible;" width="11" height="11" viewBox="0 0 11 11"><rect x="1" y="1" width="9" height="9" fill="none" stroke="#d0d0d0" stroke-width="1"/><rect x="1" y="1" width="3" height="3" fill="#d0d0d0"/><rect x="7" y="1" width="3" height="3" fill="#d0d0d0"/><rect x="4" y="4" width="3" height="3" fill="#d0d0d0"/><rect x="1" y="7" width="3" height="3" fill="#d0d0d0"/><rect x="7" y="7" width="3" height="3" fill="#d0d0d0"/></svg>
<svg style="position:absolute;left:1828.5px;top:571px;overflow:visible;" width="12" height="13" viewBox="0 0 12 13"><path d="M11 1 L5 8" stroke="#d0d0d0" stroke-width="1.8"/><path d="M5 7.5 Q1.5 8.5 1.5 12 Q5 11.5 6 9 Z" fill="#d0d0d0"/></svg>
<svg style="position:absolute;left:1844.5px;top:571px;overflow:visible;" width="12" height="12" viewBox="0 0 12 12"><path d="M6 1.5 V10.5 M1.5 6 H10.5" stroke="#d0d0d0" stroke-width="1"/><path d="M6 0.5 L4.3 2.6 H7.7Z M6 11.5 L4.3 9.4 H7.7Z M0.5 6 L2.6 4.3 V7.7Z M11.5 6 L9.4 4.3 V7.7Z" fill="#d0d0d0"/></svg>
<svg style="position:absolute;left:1861.5px;top:571px;overflow:visible;" width="13" height="12" viewBox="0 0 13 12"><rect x="2.5" y="3" width="8" height="6.5" fill="none" stroke="#d0d0d0" stroke-width="1"/><path d="M1 3 H2.5 M10.5 9.5 H12 M2.5 1 V3 M10.5 9.5 V11.5 M1 9.5 H2.5 M10.5 3 H12" stroke="#d0d0d0" stroke-width="0.9"/></svg>
<svg style="position:absolute;left:1879.5px;top:571px;overflow:visible;" width="10" height="12" viewBox="0 0 10 12"><path d="M2.5 5.5 V3.8 A2.5 2.5 0 0 1 7.5 3.8 V5.5" fill="none" stroke="#d0d0d0" stroke-width="1.3"/><rect x="1" y="5.5" width="8" height="6" rx="0.5" fill="#d0d0d0"/><rect x="4.4" y="7.5" width="1.2" height="2" fill="#535353"/></svg>
<div style="position:absolute;left:1904.3px;top:571.15px;height:12px;line-height:12px;font-size:8.5px;color:#c8c8c8;font-weight:normal;white-space:nowrap;transform:scaleX(0.875);transform-origin:0 50%;">Fläche:</div>
<div style="position:absolute;left:1932.8px;top:572px;width:27.8px;height:11.6px;background:#464646;border-radius:2px 0 0 2px;"></div>
<div style="position:absolute;left:1934.8px;top:571.95px;height:12px;line-height:12px;font-size:8.5px;color:#dedede;font-weight:normal;white-space:nowrap;transform:scaleX(0.938);transform-origin:0 50%;">100%</div>
<div style="position:absolute;left:1961.5px;top:572px;width:11.5px;height:11.6px;background:#464646;"></div>
<svg style="position:absolute;left:1963.5px;top:576px;overflow:visible;" width="8" height="5" viewBox="0 0 8 5"><path d="M1 1 L4 4 L7 1" fill="none" stroke="#bdbdbd" stroke-width="0.9"/></svg>
<div style="position:absolute;left:1770px;top:588.5px;width:194px;height:153px;background:#535353;"></div>
<div style="position:absolute;left:1964px;top:588.5px;width:9px;height:473px;background:#4a4a4a;"></div>
<div style="position:absolute;left:1770px;top:741.5px;width:194px;height:320px;background:#4c4c4c;"></div>
<div style="position:absolute;left:1794px;top:648px;width:170px;height:31px;background:#676767;"></div>
<div style="position:absolute;left:1770px;top:608.3px;width:194px;height:1px;background:#4a4a4a;"></div>
<div style="position:absolute;left:1770px;top:627.7px;width:194px;height:1px;background:#4a4a4a;"></div>
<div style="position:absolute;left:1770px;top:647.3px;width:194px;height:1px;background:#4a4a4a;"></div>
<div style="position:absolute;left:1770px;top:678.5px;width:194px;height:1px;background:#4a4a4a;"></div>
<div style="position:absolute;left:1770px;top:709.8px;width:194px;height:1px;background:#4a4a4a;"></div>
<div style="position:absolute;left:1770px;top:740.8px;width:194px;height:1px;background:#4a4a4a;"></div>
<div style="position:absolute;left:1793.4px;top:589px;width:1px;height:152px;background:#4a4a4a;"></div>
<svg style="position:absolute;left:1776px;top:594.9px;overflow:visible;" width="14" height="9" viewBox="0 0 14 9"><path d="M0.8 4.5 Q7 -1.8 13.2 4.5 Q7 10.8 0.8 4.5 Z" fill="#e6e6e6"/><circle cx="7" cy="4.5" r="2.5" fill="#535353"/><circle cx="7" cy="4.5" r="1.2" fill="#e6e6e6"/></svg>
<svg style="position:absolute;left:1796.5px;top:595.4px;overflow:visible;" width="5" height="8" viewBox="0 0 5 8"><path d="M1.2 1 L3.8 4 L1.2 7" fill="none" stroke="#9a9a9a" stroke-width="0.9"/></svg>
<svg style="position:absolute;left:1805px;top:594.4px;overflow:visible;" width="13" height="10" viewBox="0 0 13 10"><path d="M1 1.5 H5 L6 2.8 H12 V9 H1 Z" fill="#e0e0e0"/><path d="M1 3.8 H12" stroke="#b8b8b8" stroke-width="0.7"/></svg>
<div style="position:absolute;left:1825.8px;top:593.55px;height:12px;line-height:12px;font-size:8.5px;color:#dedede;font-weight:normal;white-space:nowrap;transform:scaleX(0.927);transform-origin:0 50%;">Overay</div>
<svg style="position:absolute;left:1776px;top:614.1px;overflow:visible;" width="14" height="9" viewBox="0 0 14 9"><path d="M0.8 4.5 Q7 -1.8 13.2 4.5 Q7 10.8 0.8 4.5 Z" fill="#e6e6e6"/><circle cx="7" cy="4.5" r="2.5" fill="#535353"/><circle cx="7" cy="4.5" r="1.2" fill="#e6e6e6"/></svg>
<svg style="position:absolute;left:1796.5px;top:614.6px;overflow:visible;" width="5" height="8" viewBox="0 0 5 8"><path d="M1.2 1 L3.8 4 L1.2 7" fill="none" stroke="#9a9a9a" stroke-width="0.9"/></svg>
<svg style="position:absolute;left:1805px;top:613.6px;overflow:visible;" width="13" height="10" viewBox="0 0 13 10"><path d="M1 1.5 H5 L6 2.8 H12 V9 H1 Z" fill="#e0e0e0"/><path d="M1 3.8 H12" stroke="#b8b8b8" stroke-width="0.7"/></svg>
<div style="position:absolute;left:1826.2px;top:612.45px;height:12px;line-height:12px;font-size:8.5px;color:#dedede;font-weight:normal;white-space:nowrap;transform:scaleX(0.867);transform-origin:0 50%;">Base</div>
<div style="position:absolute;left:1777px;top:633px;width:10px;height:10px;background:transparent;border:1px solid #4c4c4c;"></div>
<svg style="position:absolute;left:1796.5px;top:634px;overflow:visible;" width="5" height="8" viewBox="0 0 5 8"><path d="M1.2 1 L3.8 4 L1.2 7" fill="none" stroke="#9a9a9a" stroke-width="0.9"/></svg>
<svg style="position:absolute;left:1805px;top:633px;overflow:visible;" width="13" height="10" viewBox="0 0 13 10"><path d="M1 1.5 H5 L6 2.8 H12 V9 H1 Z" fill="#e0e0e0"/><path d="M1 3.8 H12" stroke="#b8b8b8" stroke-width="0.7"/></svg>
<div style="position:absolute;left:1826.2px;top:632.15px;height:12px;line-height:12px;font-size:8.5px;color:#dedede;font-weight:normal;white-space:nowrap;transform:scaleX(0.883);transform-origin:0 50%;">Detail</div>
<svg style="position:absolute;left:1776px;top:658.7px;overflow:visible;" width="14" height="9" viewBox="0 0 14 9"><path d="M0.8 4.5 Q7 -1.8 13.2 4.5 Q7 10.8 0.8 4.5 Z" fill="#e6e6e6"/><circle cx="7" cy="4.5" r="2.5" fill="#535353"/><circle cx="7" cy="4.5" r="1.2" fill="#e6e6e6"/></svg>
<div style="position:absolute;left:1796.5px;top:650.5px;width:18px;height:26px;background:#ffffff;background-image:linear-gradient(45deg,#d8d8d8 25%,transparent 25%,transparent 75%,#d8d8d8 75%),linear-gradient(45deg,#d8d8d8 25%,transparent 25%,transparent 75%,#d8d8d8 75%);background-size:4px 4px;background-position:0 0,2px 2px;"></div>
<svg style="position:absolute;left:1794.3px;top:648.7px;overflow:visible;" width="23" height="29" viewBox="0 0 23 29"><path d="M0.7 5 V0.7 H5 M18 0.7 H22.3 V5 M0.7 24 V28.3 H5 M18 28.3 H22.3 V24" fill="none" stroke="#e8e8e8" stroke-width="1.2"/><ellipse cx="11" cy="20" rx="4" ry="1.5" fill="#8a8a8a"/></svg>
<div style="position:absolute;left:1822px;top:657.25px;height:12px;line-height:12px;font-size:8.5px;color:#f0f0f0;font-weight:normal;white-space:nowrap;transform:scaleX(0.898);transform-origin:0 50%;">Shadow</div>
<svg style="position:absolute;left:1776px;top:690.6px;overflow:visible;" width="14" height="9" viewBox="0 0 14 9"><path d="M0.8 4.5 Q7 -1.8 13.2 4.5 Q7 10.8 0.8 4.5 Z" fill="#e6e6e6"/><circle cx="7" cy="4.5" r="2.5" fill="#535353"/><circle cx="7" cy="4.5" r="1.2" fill="#e6e6e6"/></svg>
<div style="position:absolute;left:1796.3px;top:682.3px;width:18.5px;height:25px;background:linear-gradient(180deg,#a8a8a8 0%,#e6e6e6 35%,#ffffff 55%);border:1px solid #2e2e2e;"></div>
<div style="position:absolute;left:1822px;top:689.25px;height:12px;line-height:12px;font-size:8.5px;color:#dedede;font-weight:normal;white-space:nowrap;transform:scaleX(0.915);transform-origin:0 50%;">Gruppe 1 Kopie</div>
<div style="position:absolute;left:1777px;top:722px;width:10px;height:10px;background:transparent;border:1px solid #4c4c4c;"></div>
<div style="position:absolute;left:1796.3px;top:713.8px;width:18.5px;height:25px;background:linear-gradient(180deg,#a8a8a8 0%,#e6e6e6 35%,#ffffff 55%);border:1px solid #2e2e2e;"></div>
<div style="position:absolute;left:1822px;top:720.95px;height:12px;line-height:12px;font-size:8.5px;color:#dedede;font-weight:normal;white-space:nowrap;transform:scaleX(0.914);transform-origin:0 50%;">Gruppe 1</div>
<svg style="position:absolute;left:1943px;top:721px;overflow:visible;" width="10" height="11" viewBox="0 0 10 11"><path d="M2.5 5 V3.5 A2.5 2.5 0 0 1 7.5 3.5 V5" fill="none" stroke="#e0e0e0" stroke-width="1.3"/><rect x="1" y="5" width="8" height="5.8" rx="0.5" fill="#e0e0e0"/><rect x="4.4" y="7" width="1.2" height="2" fill="#535353"/></svg>
<div style="position:absolute;left:1770px;top:1061.2px;width:203px;height:1px;background:#3e3e3e;"></div>
<div style="position:absolute;left:1770px;top:1062.2px;width:203px;height:18.8px;background:#535353;"></div>
<svg style="position:absolute;left:1819px;top:1068px;overflow:visible;" width="13" height="8" viewBox="0 0 13 8"><rect x="1" y="1.5" width="5" height="5" rx="2.5" fill="none" stroke="#8e8e8e" stroke-width="1"/><rect x="6.5" y="1.5" width="5" height="5" rx="2.5" fill="none" stroke="#8e8e8e" stroke-width="1"/></svg>
<div style="position:absolute;left:1841.5px;top:1064.67px;height:13px;line-height:13px;font-size:9.5px;color:#c8c8c8;font-weight:normal;white-space:nowrap;font-style:italic;">fx</div>
<svg style="position:absolute;left:1849px;top:1074px;overflow:visible;" width="4" height="3" viewBox="0 0 4 3"><path d="M0 0 H3 L1.5 2Z" fill="#c8c8c8"/></svg>
<svg style="position:absolute;left:1861px;top:1066px;overflow:visible;" width="12" height="10" viewBox="0 0 12 10"><rect x="1" y="1" width="10" height="8" fill="#c8c8c8"/><circle cx="6" cy="5" r="2.6" fill="#535353"/></svg>
<svg style="position:absolute;left:1882px;top:1066px;overflow:visible;" width="13" height="12" viewBox="0 0 13 12"><circle cx="5.5" cy="5.5" r="4.3" fill="none" stroke="#c8c8c8" stroke-width="1"/><path d="M9 3 L2 8 A4.3 4.3 0 0 0 9 3Z" fill="#c8c8c8"/><path d="M10 10 H13 L11.5 12Z" fill="#c8c8c8"/></svg>
<svg style="position:absolute;left:1902px;top:1066px;overflow:visible;" width="13" height="11" viewBox="0 0 13 11"><path d="M1 1.5 H5 L6 2.8 H12 V10 H1 Z" fill="#c8c8c8"/></svg>
<svg style="position:absolute;left:1923px;top:1066px;overflow:visible;" width="12" height="12" viewBox="0 0 12 12"><rect x="1.5" y="1.5" width="9" height="9" fill="none" stroke="#c8c8c8" stroke-width="1"/><path d="M6 3.5 V8.5 M3.5 6 H8.5" stroke="#c8c8c8" stroke-width="1.1"/></svg>
<svg style="position:absolute;left:1944px;top:1065px;overflow:visible;" width="12" height="13" viewBox="0 0 12 13"><path d="M1.5 3 H10.5 M4.5 3 V1.5 H7.5 V3" fill="none" stroke="#c8c8c8" stroke-width="1"/><rect x="2.5" y="4" width="7" height="8" fill="none" stroke="#c8c8c8" stroke-width="1"/><path d="M4.5 5.5 V10.5 M6 5.5 V10.5 M7.5 5.5 V10.5" stroke="#c8c8c8" stroke-width="0.7"/></svg>

</body></html>
